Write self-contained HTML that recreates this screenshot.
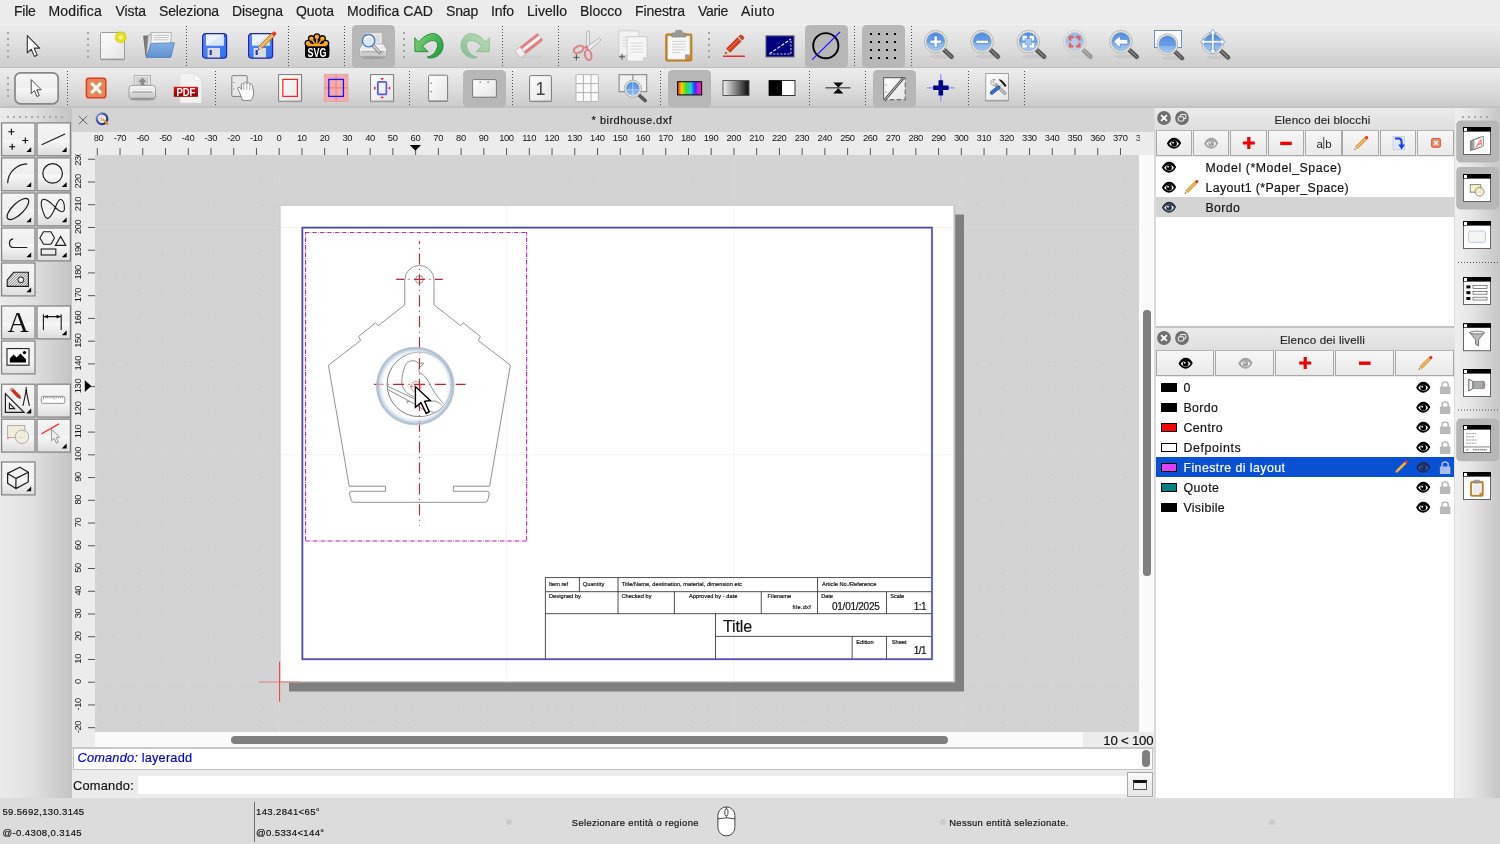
<!DOCTYPE html>
<html lang="it"><head><meta charset="utf-8"><title>LibreCAD - birdhouse.dxf</title>
<style>
html,body{margin:0;padding:0;}
body{width:1500px;height:844px;overflow:hidden;position:relative;background:#dcdcdc;font-family:"Liberation Sans", sans-serif;}
.a{position:absolute;}
.t{position:absolute;white-space:pre;line-height:1;font-family:"Liberation Sans", sans-serif;-webkit-text-stroke:0.18px;}
svg{position:absolute;left:0;top:0;overflow:visible;will-change:transform;}
#tx{position:absolute;left:0;top:0;width:1500px;height:844px;will-change:transform;}

.btn{position:absolute;box-sizing:border-box;border:1px solid #8e8e8e;background:linear-gradient(#f6f6f6,#e2e2e2);}
.tb{position:absolute;box-sizing:border-box;border:1px solid #8f8f8f;background:linear-gradient(#fbfbfb 0%,#f0f0f0 45%,#e4e4e4 100%);}
.db{position:absolute;box-sizing:border-box;border:1.2px solid #a9a9a9;border-top-color:#b4b4b4;background:linear-gradient(#f7f7f7,#e9e9e9);}
.pr{position:absolute;background:#b9b9b9;border-radius:5px;}

.rl{font-family:"Liberation Sans",sans-serif;font-size:9.4px;letter-spacing:-0.4px;fill:#161616;}
.tbk{font-family:"Liberation Sans",sans-serif;fill:#111;}

</style></head><body>
<div class="a" style="left:0px;top:0px;width:1500px;height:24px;background:#ececec;"></div>
<div class="a" style="left:0px;top:24px;width:1500px;height:44px;background:linear-gradient(#f2f2f2 0%,#ebebeb 4%,#e3e3e3 35%,#cdcdcd 100%);"></div>
<div class="a" style="left:0px;top:67.3px;width:1500px;height:1px;background:#c0c0c0;"></div>
<div class="a" style="left:0px;top:68.3px;width:1500px;height:38.7px;background:linear-gradient(#ededed 0%,#e3e3e3 35%,#cbcbcb 100%);"></div>
<div class="a" style="left:0px;top:106px;width:1500px;height:2px;background:#c2c2c2;"></div>
<div class="a" style="left:0px;top:108px;width:72px;height:690px;background:linear-gradient(90deg,#ebebeb 0%,#e2e2e2 40%,#c3c3c3 100%);"></div>
<div class="a" style="left:72px;top:108px;width:1082px;height:24px;background:#d4d4d4;"></div>
<div class="a" style="left:72px;top:132px;width:1082px;height:23px;background:#ececec;"></div>
<div class="a" style="left:72px;top:155px;width:23px;height:592px;background:#ececec;"></div>
<div class="a" style="left:95px;top:155px;width:1044px;height:577px;background:#d3d3d3;"></div>
<div class="a" style="left:1139px;top:155px;width:15px;height:577px;background:#fafafa;"></div>
<div class="a" style="left:95px;top:732px;width:988px;height:15px;background:#fafafa;"></div>
<div class="a" style="left:1083px;top:732px;width:71px;height:15px;background:#ececec;"></div>
<div class="a" style="left:231px;top:736px;width:717px;height:8px;background:#7f7f7f;border-radius:4px;"></div>
<div class="a" style="left:1143.2px;top:309.5px;width:7.6px;height:266px;background:#7f7f7f;border-radius:3.5px;"></div>
<div class="a" style="left:72px;top:747px;width:1082px;height:51px;background:#ececec;"></div>
<div class="a" style="left:72px;top:747px;width:1082px;height:2px;background:#c8c8c8;"></div>
<div class="a" style="left:73px;top:749px;width:1080px;height:21px;background:#fff;box-sizing:border-box;border:1px solid #c2c2c2;border-top:none;"></div>
<div class="a" style="left:1138px;top:749px;width:14px;height:20px;background:#fafafa;"></div>
<div class="a" style="left:1142px;top:750px;width:8px;height:17px;background:#7f7f7f;border-radius:4px;"></div>
<div class="a" style="left:138px;top:776px;width:989px;height:18px;background:#fff;"></div>
<div class="a" style="left:1127px;top:772px;width:26px;height:25px;box-sizing:border-box;border:1px solid #a8a8a8;background:linear-gradient(#fafafa,#e6e6e6);"></div>
<div class="a" style="left:1133px;top:780px;width:14px;height:9.5px;box-sizing:border-box;border:1px solid #555;border-top:3px solid #111;background:#f4f4f4;"></div>
<div class="a" style="left:1154px;top:108px;width:299px;height:690px;background:#ececec;"></div>
<div class="a" style="left:1154px;top:108px;width:1.5px;height:690px;background:#dadada;"></div>
<div class="a" style="left:1155px;top:108px;width:299.5px;height:23px;background:linear-gradient(#ebebeb,#dedede);"></div>
<div class="a" style="left:1155.6px;top:157px;width:298.9px;height:169px;background:#fff;"></div>
<div class="a" style="left:1155.6px;top:326px;width:298.9px;height:1.5px;background:#c4c4c4;"></div>
<div class="a" style="left:1155.6px;top:197px;width:298.9px;height:20px;background:#d4d4d4;"></div>
<div class="a" style="left:1155px;top:328px;width:299.5px;height:22px;background:linear-gradient(#ebebeb,#dedede);"></div>
<div class="a" style="left:1155.6px;top:377px;width:298.9px;height:421px;background:#fff;"></div>
<div class="a" style="left:1155.6px;top:457px;width:298.9px;height:20px;background:#0a50d2;"></div>
<div class="db" style="left:1155.6px;top:130px;width:36.5px;height:25.6px;"></div>
<div class="db" style="left:1192.9px;top:130px;width:36.5px;height:25.6px;"></div>
<div class="db" style="left:1230.3px;top:130px;width:36.5px;height:25.6px;"></div>
<div class="db" style="left:1267.6px;top:130px;width:36.5px;height:25.6px;"></div>
<div class="db" style="left:1305.0px;top:130px;width:36.5px;height:25.6px;"></div>
<div class="db" style="left:1342.3px;top:130px;width:36.5px;height:25.6px;"></div>
<div class="db" style="left:1379.7px;top:130px;width:36.5px;height:25.6px;"></div>
<div class="db" style="left:1417.0px;top:130px;width:36.5px;height:25.6px;"></div>
<div class="db" style="left:1155.6px;top:350px;width:58.9px;height:25.7px;"></div>
<div class="db" style="left:1215.4px;top:350px;width:58.9px;height:25.7px;"></div>
<div class="db" style="left:1275.1px;top:350px;width:58.9px;height:25.7px;"></div>
<div class="db" style="left:1334.9px;top:350px;width:58.9px;height:25.7px;"></div>
<div class="db" style="left:1394.7px;top:350px;width:58.9px;height:25.7px;"></div>
<div class="a" style="left:1161px;top:383px;width:16px;height:8.8px;box-sizing:border-box;border:1px solid #000;background:#000;"></div>
<div class="a" style="left:1161px;top:403px;width:16px;height:8.8px;box-sizing:border-box;border:1px solid #000;background:#000;"></div>
<div class="a" style="left:1161px;top:423px;width:16px;height:8.8px;box-sizing:border-box;border:1px solid #000;background:#f00;"></div>
<div class="a" style="left:1161px;top:443px;width:16px;height:8.8px;box-sizing:border-box;border:1px solid #000;background:#fff;"></div>
<div class="a" style="left:1161px;top:463px;width:16px;height:8.8px;box-sizing:border-box;border:1px solid #000;background:#e040fb;"></div>
<div class="a" style="left:1161px;top:483px;width:16px;height:8.8px;box-sizing:border-box;border:1px solid #000;background:#008080;"></div>
<div class="a" style="left:1161px;top:503px;width:16px;height:8.8px;box-sizing:border-box;border:1px solid #000;background:#000;"></div>
<div class="a" style="left:1454.5px;top:108px;width:45.5px;height:690px;background:linear-gradient(90deg,#efefef 0%,#e6e6e6 35%,#c6c6c6 100%);"></div>
<div class="a" style="left:0px;top:798px;width:1500px;height:46px;background:#dcdcdc;"></div>
<div class="a" style="left:253.5px;top:802px;width:1px;height:40px;background:#6e6e6e;"></div>
<div class="a" style="left:506px;top:819px;width:6px;height:6px;background:#cbcbcb;border-radius:3px;"></div>
<div class="a" style="left:940px;top:819px;width:6px;height:6px;background:#cbcbcb;border-radius:3px;"></div>
<div class="a" style="left:1269px;top:819px;width:6px;height:6px;background:#cbcbcb;border-radius:3px;"></div>
<svg width="1500" height="844" viewBox="0 0 1500 844"><defs><clipPath id="cH"><rect x="94.2" y="132" width="1045.5" height="23"/></clipPath><clipPath id="cV"><rect x="72" y="154.2" width="23" height="581"/></clipPath><clipPath id="cD"><rect x="95" y="155" width="1044" height="577"/></clipPath><radialGradient id="glow" cx="0.5" cy="0.5" r="0.5"><stop offset="0.78" stop-color="#ffffff" stop-opacity="0"/><stop offset="0.86" stop-color="#dfe7ef" stop-opacity="0.6"/><stop offset="0.92" stop-color="#b9c9d9" stop-opacity="0.82"/><stop offset="0.955" stop-color="#9fb3c8" stop-opacity="0.88"/><stop offset="0.985" stop-color="#b4c4d4" stop-opacity="0.8"/><stop offset="1" stop-color="#d0dae4" stop-opacity="0.45"/></radialGradient></defs><g clip-path="url(#cH)"><rect x="96.80" y="148" width="1" height="7" fill="#555"/><text class="rl" x="97.10" y="140.7" text-anchor="middle">-80</text><rect x="119.54" y="148" width="1" height="7" fill="#555"/><text class="rl" x="119.84" y="140.7" text-anchor="middle">-70</text><rect x="142.28" y="148" width="1" height="7" fill="#555"/><text class="rl" x="142.58" y="140.7" text-anchor="middle">-60</text><rect x="165.01" y="148" width="1" height="7" fill="#555"/><text class="rl" x="165.31" y="140.7" text-anchor="middle">-50</text><rect x="187.75" y="148" width="1" height="7" fill="#555"/><text class="rl" x="188.05" y="140.7" text-anchor="middle">-40</text><rect x="210.49" y="148" width="1" height="7" fill="#555"/><text class="rl" x="210.79" y="140.7" text-anchor="middle">-30</text><rect x="233.23" y="148" width="1" height="7" fill="#555"/><text class="rl" x="233.53" y="140.7" text-anchor="middle">-20</text><rect x="255.96" y="148" width="1" height="7" fill="#555"/><text class="rl" x="256.26" y="140.7" text-anchor="middle">-10</text><rect x="278.70" y="148" width="1" height="7" fill="#555"/><text class="rl" x="279.00" y="140.7" text-anchor="middle">0</text><rect x="301.44" y="148" width="1" height="7" fill="#555"/><text class="rl" x="301.74" y="140.7" text-anchor="middle">10</text><rect x="324.17" y="148" width="1" height="7" fill="#555"/><text class="rl" x="324.47" y="140.7" text-anchor="middle">20</text><rect x="346.91" y="148" width="1" height="7" fill="#555"/><text class="rl" x="347.21" y="140.7" text-anchor="middle">30</text><rect x="369.65" y="148" width="1" height="7" fill="#555"/><text class="rl" x="369.95" y="140.7" text-anchor="middle">40</text><rect x="392.38" y="148" width="1" height="7" fill="#555"/><text class="rl" x="392.69" y="140.7" text-anchor="middle">50</text><rect x="415.12" y="148" width="1" height="7" fill="#555"/><text class="rl" x="415.42" y="140.7" text-anchor="middle">60</text><rect x="437.86" y="148" width="1" height="7" fill="#555"/><text class="rl" x="438.16" y="140.7" text-anchor="middle">70</text><rect x="460.60" y="148" width="1" height="7" fill="#555"/><text class="rl" x="460.90" y="140.7" text-anchor="middle">80</text><rect x="483.33" y="148" width="1" height="7" fill="#555"/><text class="rl" x="483.63" y="140.7" text-anchor="middle">90</text><rect x="506.07" y="148" width="1" height="7" fill="#555"/><text class="rl" x="506.37" y="140.7" text-anchor="middle">100</text><rect x="528.81" y="148" width="1" height="7" fill="#555"/><text class="rl" x="529.11" y="140.7" text-anchor="middle">110</text><rect x="551.54" y="148" width="1" height="7" fill="#555"/><text class="rl" x="551.84" y="140.7" text-anchor="middle">120</text><rect x="574.28" y="148" width="1" height="7" fill="#555"/><text class="rl" x="574.58" y="140.7" text-anchor="middle">130</text><rect x="597.02" y="148" width="1" height="7" fill="#555"/><text class="rl" x="597.32" y="140.7" text-anchor="middle">140</text><rect x="619.75" y="148" width="1" height="7" fill="#555"/><text class="rl" x="620.05" y="140.7" text-anchor="middle">150</text><rect x="642.49" y="148" width="1" height="7" fill="#555"/><text class="rl" x="642.79" y="140.7" text-anchor="middle">160</text><rect x="665.23" y="148" width="1" height="7" fill="#555"/><text class="rl" x="665.53" y="140.7" text-anchor="middle">170</text><rect x="687.97" y="148" width="1" height="7" fill="#555"/><text class="rl" x="688.27" y="140.7" text-anchor="middle">180</text><rect x="710.70" y="148" width="1" height="7" fill="#555"/><text class="rl" x="711.00" y="140.7" text-anchor="middle">190</text><rect x="733.44" y="148" width="1" height="7" fill="#555"/><text class="rl" x="733.74" y="140.7" text-anchor="middle">200</text><rect x="756.18" y="148" width="1" height="7" fill="#555"/><text class="rl" x="756.48" y="140.7" text-anchor="middle">210</text><rect x="778.91" y="148" width="1" height="7" fill="#555"/><text class="rl" x="779.21" y="140.7" text-anchor="middle">220</text><rect x="801.65" y="148" width="1" height="7" fill="#555"/><text class="rl" x="801.95" y="140.7" text-anchor="middle">230</text><rect x="824.39" y="148" width="1" height="7" fill="#555"/><text class="rl" x="824.69" y="140.7" text-anchor="middle">240</text><rect x="847.12" y="148" width="1" height="7" fill="#555"/><text class="rl" x="847.42" y="140.7" text-anchor="middle">250</text><rect x="869.86" y="148" width="1" height="7" fill="#555"/><text class="rl" x="870.16" y="140.7" text-anchor="middle">260</text><rect x="892.60" y="148" width="1" height="7" fill="#555"/><text class="rl" x="892.90" y="140.7" text-anchor="middle">270</text><rect x="915.34" y="148" width="1" height="7" fill="#555"/><text class="rl" x="915.64" y="140.7" text-anchor="middle">280</text><rect x="938.07" y="148" width="1" height="7" fill="#555"/><text class="rl" x="938.37" y="140.7" text-anchor="middle">290</text><rect x="960.81" y="148" width="1" height="7" fill="#555"/><text class="rl" x="961.11" y="140.7" text-anchor="middle">300</text><rect x="983.55" y="148" width="1" height="7" fill="#555"/><text class="rl" x="983.85" y="140.7" text-anchor="middle">310</text><rect x="1006.28" y="148" width="1" height="7" fill="#555"/><text class="rl" x="1006.58" y="140.7" text-anchor="middle">320</text><rect x="1029.02" y="148" width="1" height="7" fill="#555"/><text class="rl" x="1029.32" y="140.7" text-anchor="middle">330</text><rect x="1051.76" y="148" width="1" height="7" fill="#555"/><text class="rl" x="1052.06" y="140.7" text-anchor="middle">340</text><rect x="1074.49" y="148" width="1" height="7" fill="#555"/><text class="rl" x="1074.79" y="140.7" text-anchor="middle">350</text><rect x="1097.23" y="148" width="1" height="7" fill="#555"/><text class="rl" x="1097.53" y="140.7" text-anchor="middle">360</text><rect x="1119.97" y="148" width="1" height="7" fill="#555"/><text class="rl" x="1120.27" y="140.7" text-anchor="middle">370</text><rect x="1142.71" y="148" width="1" height="7" fill="#555"/><text class="rl" x="1143.01" y="140.7" text-anchor="middle">380</text><rect x="1165.44" y="148" width="1" height="7" fill="#555"/><text class="rl" x="1165.74" y="140.7" text-anchor="middle">390</text></g><g clip-path="url(#cV)"><rect x="88" y="727.17" width="7" height="1" fill="#555"/><text class="rl" transform="translate(81.4,727.07) rotate(-90)" text-anchor="middle">-20</text><rect x="88" y="704.44" width="7" height="1" fill="#555"/><text class="rl" transform="translate(81.4,704.34) rotate(-90)" text-anchor="middle">-10</text><rect x="88" y="681.70" width="7" height="1" fill="#555"/><text class="rl" transform="translate(81.4,681.60) rotate(-90)" text-anchor="middle">0</text><rect x="88" y="658.96" width="7" height="1" fill="#555"/><text class="rl" transform="translate(81.4,658.86) rotate(-90)" text-anchor="middle">10</text><rect x="88" y="636.23" width="7" height="1" fill="#555"/><text class="rl" transform="translate(81.4,636.13) rotate(-90)" text-anchor="middle">20</text><rect x="88" y="613.49" width="7" height="1" fill="#555"/><text class="rl" transform="translate(81.4,613.39) rotate(-90)" text-anchor="middle">30</text><rect x="88" y="590.75" width="7" height="1" fill="#555"/><text class="rl" transform="translate(81.4,590.65) rotate(-90)" text-anchor="middle">40</text><rect x="88" y="568.02" width="7" height="1" fill="#555"/><text class="rl" transform="translate(81.4,567.92) rotate(-90)" text-anchor="middle">50</text><rect x="88" y="545.28" width="7" height="1" fill="#555"/><text class="rl" transform="translate(81.4,545.18) rotate(-90)" text-anchor="middle">60</text><rect x="88" y="522.54" width="7" height="1" fill="#555"/><text class="rl" transform="translate(81.4,522.44) rotate(-90)" text-anchor="middle">70</text><rect x="88" y="499.80" width="7" height="1" fill="#555"/><text class="rl" transform="translate(81.4,499.70) rotate(-90)" text-anchor="middle">80</text><rect x="88" y="477.07" width="7" height="1" fill="#555"/><text class="rl" transform="translate(81.4,476.97) rotate(-90)" text-anchor="middle">90</text><rect x="88" y="454.33" width="7" height="1" fill="#555"/><text class="rl" transform="translate(81.4,454.23) rotate(-90)" text-anchor="middle">100</text><rect x="88" y="431.59" width="7" height="1" fill="#555"/><text class="rl" transform="translate(81.4,431.49) rotate(-90)" text-anchor="middle">110</text><rect x="88" y="408.86" width="7" height="1" fill="#555"/><text class="rl" transform="translate(81.4,408.76) rotate(-90)" text-anchor="middle">120</text><rect x="88" y="386.12" width="7" height="1" fill="#555"/><text class="rl" transform="translate(81.4,386.02) rotate(-90)" text-anchor="middle">130</text><rect x="88" y="363.38" width="7" height="1" fill="#555"/><text class="rl" transform="translate(81.4,363.28) rotate(-90)" text-anchor="middle">140</text><rect x="88" y="340.65" width="7" height="1" fill="#555"/><text class="rl" transform="translate(81.4,340.55) rotate(-90)" text-anchor="middle">150</text><rect x="88" y="317.91" width="7" height="1" fill="#555"/><text class="rl" transform="translate(81.4,317.81) rotate(-90)" text-anchor="middle">160</text><rect x="88" y="295.17" width="7" height="1" fill="#555"/><text class="rl" transform="translate(81.4,295.07) rotate(-90)" text-anchor="middle">170</text><rect x="88" y="272.43" width="7" height="1" fill="#555"/><text class="rl" transform="translate(81.4,272.33) rotate(-90)" text-anchor="middle">180</text><rect x="88" y="249.70" width="7" height="1" fill="#555"/><text class="rl" transform="translate(81.4,249.60) rotate(-90)" text-anchor="middle">190</text><rect x="88" y="226.96" width="7" height="1" fill="#555"/><text class="rl" transform="translate(81.4,226.86) rotate(-90)" text-anchor="middle">200</text><rect x="88" y="204.22" width="7" height="1" fill="#555"/><text class="rl" transform="translate(81.4,204.12) rotate(-90)" text-anchor="middle">210</text><rect x="88" y="181.49" width="7" height="1" fill="#555"/><text class="rl" transform="translate(81.4,181.39) rotate(-90)" text-anchor="middle">220</text><rect x="88" y="158.75" width="7" height="1" fill="#555"/><text class="rl" transform="translate(81.4,158.65) rotate(-90)" text-anchor="middle">230</text><rect x="88" y="136.01" width="7" height="1" fill="#555"/><text class="rl" transform="translate(81.4,135.91) rotate(-90)" text-anchor="middle">240</text></g><path d="M409.8 145 L421 145 L415.4 150.8 Z" fill="#000"/><path d="M84.8 380.2 L84.8 392 L91.3 386.1 Z" fill="#000"/><g clip-path="url(#cD)"><path d="M96.7 727.1h1.2v1.2h-1.2zM96.7 704.3h1.2v1.2h-1.2zM96.7 681.6h1.2v1.2h-1.2zM96.7 658.9h1.2v1.2h-1.2zM96.7 636.1h1.2v1.2h-1.2zM96.7 613.4h1.2v1.2h-1.2zM96.7 590.7h1.2v1.2h-1.2zM96.7 567.9h1.2v1.2h-1.2zM96.7 545.2h1.2v1.2h-1.2zM96.7 522.4h1.2v1.2h-1.2zM96.7 499.7h1.2v1.2h-1.2zM96.7 477.0h1.2v1.2h-1.2zM96.7 454.2h1.2v1.2h-1.2zM96.7 431.5h1.2v1.2h-1.2zM96.7 408.8h1.2v1.2h-1.2zM96.7 386.0h1.2v1.2h-1.2zM96.7 363.3h1.2v1.2h-1.2zM96.7 340.5h1.2v1.2h-1.2zM96.7 317.8h1.2v1.2h-1.2zM96.7 295.1h1.2v1.2h-1.2zM96.7 272.3h1.2v1.2h-1.2zM96.7 249.6h1.2v1.2h-1.2zM96.7 226.9h1.2v1.2h-1.2zM96.7 204.1h1.2v1.2h-1.2zM96.7 181.4h1.2v1.2h-1.2zM96.7 158.6h1.2v1.2h-1.2zM119.4 727.1h1.2v1.2h-1.2zM119.4 704.3h1.2v1.2h-1.2zM119.4 681.6h1.2v1.2h-1.2zM119.4 658.9h1.2v1.2h-1.2zM119.4 636.1h1.2v1.2h-1.2zM119.4 613.4h1.2v1.2h-1.2zM119.4 590.7h1.2v1.2h-1.2zM119.4 567.9h1.2v1.2h-1.2zM119.4 545.2h1.2v1.2h-1.2zM119.4 522.4h1.2v1.2h-1.2zM119.4 499.7h1.2v1.2h-1.2zM119.4 477.0h1.2v1.2h-1.2zM119.4 454.2h1.2v1.2h-1.2zM119.4 431.5h1.2v1.2h-1.2zM119.4 408.8h1.2v1.2h-1.2zM119.4 386.0h1.2v1.2h-1.2zM119.4 363.3h1.2v1.2h-1.2zM119.4 340.5h1.2v1.2h-1.2zM119.4 317.8h1.2v1.2h-1.2zM119.4 295.1h1.2v1.2h-1.2zM119.4 272.3h1.2v1.2h-1.2zM119.4 249.6h1.2v1.2h-1.2zM119.4 226.9h1.2v1.2h-1.2zM119.4 204.1h1.2v1.2h-1.2zM119.4 181.4h1.2v1.2h-1.2zM119.4 158.6h1.2v1.2h-1.2zM142.2 727.1h1.2v1.2h-1.2zM142.2 704.3h1.2v1.2h-1.2zM142.2 681.6h1.2v1.2h-1.2zM142.2 658.9h1.2v1.2h-1.2zM142.2 636.1h1.2v1.2h-1.2zM142.2 613.4h1.2v1.2h-1.2zM142.2 590.7h1.2v1.2h-1.2zM142.2 567.9h1.2v1.2h-1.2zM142.2 545.2h1.2v1.2h-1.2zM142.2 522.4h1.2v1.2h-1.2zM142.2 499.7h1.2v1.2h-1.2zM142.2 477.0h1.2v1.2h-1.2zM142.2 454.2h1.2v1.2h-1.2zM142.2 431.5h1.2v1.2h-1.2zM142.2 408.8h1.2v1.2h-1.2zM142.2 386.0h1.2v1.2h-1.2zM142.2 363.3h1.2v1.2h-1.2zM142.2 340.5h1.2v1.2h-1.2zM142.2 317.8h1.2v1.2h-1.2zM142.2 295.1h1.2v1.2h-1.2zM142.2 272.3h1.2v1.2h-1.2zM142.2 249.6h1.2v1.2h-1.2zM142.2 226.9h1.2v1.2h-1.2zM142.2 204.1h1.2v1.2h-1.2zM142.2 181.4h1.2v1.2h-1.2zM142.2 158.6h1.2v1.2h-1.2zM164.9 727.1h1.2v1.2h-1.2zM164.9 704.3h1.2v1.2h-1.2zM164.9 681.6h1.2v1.2h-1.2zM164.9 658.9h1.2v1.2h-1.2zM164.9 636.1h1.2v1.2h-1.2zM164.9 613.4h1.2v1.2h-1.2zM164.9 590.7h1.2v1.2h-1.2zM164.9 567.9h1.2v1.2h-1.2zM164.9 545.2h1.2v1.2h-1.2zM164.9 522.4h1.2v1.2h-1.2zM164.9 499.7h1.2v1.2h-1.2zM164.9 477.0h1.2v1.2h-1.2zM164.9 454.2h1.2v1.2h-1.2zM164.9 431.5h1.2v1.2h-1.2zM164.9 408.8h1.2v1.2h-1.2zM164.9 386.0h1.2v1.2h-1.2zM164.9 363.3h1.2v1.2h-1.2zM164.9 340.5h1.2v1.2h-1.2zM164.9 317.8h1.2v1.2h-1.2zM164.9 295.1h1.2v1.2h-1.2zM164.9 272.3h1.2v1.2h-1.2zM164.9 249.6h1.2v1.2h-1.2zM164.9 226.9h1.2v1.2h-1.2zM164.9 204.1h1.2v1.2h-1.2zM164.9 181.4h1.2v1.2h-1.2zM164.9 158.6h1.2v1.2h-1.2zM187.7 727.1h1.2v1.2h-1.2zM187.7 704.3h1.2v1.2h-1.2zM187.7 681.6h1.2v1.2h-1.2zM187.7 658.9h1.2v1.2h-1.2zM187.7 636.1h1.2v1.2h-1.2zM187.7 613.4h1.2v1.2h-1.2zM187.7 590.7h1.2v1.2h-1.2zM187.7 567.9h1.2v1.2h-1.2zM187.7 545.2h1.2v1.2h-1.2zM187.7 522.4h1.2v1.2h-1.2zM187.7 499.7h1.2v1.2h-1.2zM187.7 477.0h1.2v1.2h-1.2zM187.7 454.2h1.2v1.2h-1.2zM187.7 431.5h1.2v1.2h-1.2zM187.7 408.8h1.2v1.2h-1.2zM187.7 386.0h1.2v1.2h-1.2zM187.7 363.3h1.2v1.2h-1.2zM187.7 340.5h1.2v1.2h-1.2zM187.7 317.8h1.2v1.2h-1.2zM187.7 295.1h1.2v1.2h-1.2zM187.7 272.3h1.2v1.2h-1.2zM187.7 249.6h1.2v1.2h-1.2zM187.7 226.9h1.2v1.2h-1.2zM187.7 204.1h1.2v1.2h-1.2zM187.7 181.4h1.2v1.2h-1.2zM187.7 158.6h1.2v1.2h-1.2zM210.4 727.1h1.2v1.2h-1.2zM210.4 704.3h1.2v1.2h-1.2zM210.4 681.6h1.2v1.2h-1.2zM210.4 658.9h1.2v1.2h-1.2zM210.4 636.1h1.2v1.2h-1.2zM210.4 613.4h1.2v1.2h-1.2zM210.4 590.7h1.2v1.2h-1.2zM210.4 567.9h1.2v1.2h-1.2zM210.4 545.2h1.2v1.2h-1.2zM210.4 522.4h1.2v1.2h-1.2zM210.4 499.7h1.2v1.2h-1.2zM210.4 477.0h1.2v1.2h-1.2zM210.4 454.2h1.2v1.2h-1.2zM210.4 431.5h1.2v1.2h-1.2zM210.4 408.8h1.2v1.2h-1.2zM210.4 386.0h1.2v1.2h-1.2zM210.4 363.3h1.2v1.2h-1.2zM210.4 340.5h1.2v1.2h-1.2zM210.4 317.8h1.2v1.2h-1.2zM210.4 295.1h1.2v1.2h-1.2zM210.4 272.3h1.2v1.2h-1.2zM210.4 249.6h1.2v1.2h-1.2zM210.4 226.9h1.2v1.2h-1.2zM210.4 204.1h1.2v1.2h-1.2zM210.4 181.4h1.2v1.2h-1.2zM210.4 158.6h1.2v1.2h-1.2zM233.1 727.1h1.2v1.2h-1.2zM233.1 704.3h1.2v1.2h-1.2zM233.1 681.6h1.2v1.2h-1.2zM233.1 658.9h1.2v1.2h-1.2zM233.1 636.1h1.2v1.2h-1.2zM233.1 613.4h1.2v1.2h-1.2zM233.1 590.7h1.2v1.2h-1.2zM233.1 567.9h1.2v1.2h-1.2zM233.1 545.2h1.2v1.2h-1.2zM233.1 522.4h1.2v1.2h-1.2zM233.1 499.7h1.2v1.2h-1.2zM233.1 477.0h1.2v1.2h-1.2zM233.1 454.2h1.2v1.2h-1.2zM233.1 431.5h1.2v1.2h-1.2zM233.1 408.8h1.2v1.2h-1.2zM233.1 386.0h1.2v1.2h-1.2zM233.1 363.3h1.2v1.2h-1.2zM233.1 340.5h1.2v1.2h-1.2zM233.1 317.8h1.2v1.2h-1.2zM233.1 295.1h1.2v1.2h-1.2zM233.1 272.3h1.2v1.2h-1.2zM233.1 249.6h1.2v1.2h-1.2zM233.1 226.9h1.2v1.2h-1.2zM233.1 204.1h1.2v1.2h-1.2zM233.1 181.4h1.2v1.2h-1.2zM233.1 158.6h1.2v1.2h-1.2zM255.9 727.1h1.2v1.2h-1.2zM255.9 704.3h1.2v1.2h-1.2zM255.9 681.6h1.2v1.2h-1.2zM255.9 658.9h1.2v1.2h-1.2zM255.9 636.1h1.2v1.2h-1.2zM255.9 613.4h1.2v1.2h-1.2zM255.9 590.7h1.2v1.2h-1.2zM255.9 567.9h1.2v1.2h-1.2zM255.9 545.2h1.2v1.2h-1.2zM255.9 522.4h1.2v1.2h-1.2zM255.9 499.7h1.2v1.2h-1.2zM255.9 477.0h1.2v1.2h-1.2zM255.9 454.2h1.2v1.2h-1.2zM255.9 431.5h1.2v1.2h-1.2zM255.9 408.8h1.2v1.2h-1.2zM255.9 386.0h1.2v1.2h-1.2zM255.9 363.3h1.2v1.2h-1.2zM255.9 340.5h1.2v1.2h-1.2zM255.9 317.8h1.2v1.2h-1.2zM255.9 295.1h1.2v1.2h-1.2zM255.9 272.3h1.2v1.2h-1.2zM255.9 249.6h1.2v1.2h-1.2zM255.9 226.9h1.2v1.2h-1.2zM255.9 204.1h1.2v1.2h-1.2zM255.9 181.4h1.2v1.2h-1.2zM255.9 158.6h1.2v1.2h-1.2zM278.6 727.1h1.2v1.2h-1.2zM278.6 704.3h1.2v1.2h-1.2zM278.6 181.4h1.2v1.2h-1.2zM278.6 158.6h1.2v1.2h-1.2zM301.3 727.1h1.2v1.2h-1.2zM301.3 704.3h1.2v1.2h-1.2zM301.3 181.4h1.2v1.2h-1.2zM301.3 158.6h1.2v1.2h-1.2zM324.1 727.1h1.2v1.2h-1.2zM324.1 704.3h1.2v1.2h-1.2zM324.1 181.4h1.2v1.2h-1.2zM324.1 158.6h1.2v1.2h-1.2zM346.8 727.1h1.2v1.2h-1.2zM346.8 704.3h1.2v1.2h-1.2zM346.8 181.4h1.2v1.2h-1.2zM346.8 158.6h1.2v1.2h-1.2zM369.5 727.1h1.2v1.2h-1.2zM369.5 704.3h1.2v1.2h-1.2zM369.5 181.4h1.2v1.2h-1.2zM369.5 158.6h1.2v1.2h-1.2zM392.3 727.1h1.2v1.2h-1.2zM392.3 704.3h1.2v1.2h-1.2zM392.3 181.4h1.2v1.2h-1.2zM392.3 158.6h1.2v1.2h-1.2zM415.0 727.1h1.2v1.2h-1.2zM415.0 704.3h1.2v1.2h-1.2zM415.0 181.4h1.2v1.2h-1.2zM415.0 158.6h1.2v1.2h-1.2zM437.8 727.1h1.2v1.2h-1.2zM437.8 704.3h1.2v1.2h-1.2zM437.8 181.4h1.2v1.2h-1.2zM437.8 158.6h1.2v1.2h-1.2zM460.5 727.1h1.2v1.2h-1.2zM460.5 704.3h1.2v1.2h-1.2zM460.5 181.4h1.2v1.2h-1.2zM460.5 158.6h1.2v1.2h-1.2zM483.2 727.1h1.2v1.2h-1.2zM483.2 704.3h1.2v1.2h-1.2zM483.2 181.4h1.2v1.2h-1.2zM483.2 158.6h1.2v1.2h-1.2zM506.0 727.1h1.2v1.2h-1.2zM506.0 704.3h1.2v1.2h-1.2zM506.0 181.4h1.2v1.2h-1.2zM506.0 158.6h1.2v1.2h-1.2zM528.7 727.1h1.2v1.2h-1.2zM528.7 704.3h1.2v1.2h-1.2zM528.7 181.4h1.2v1.2h-1.2zM528.7 158.6h1.2v1.2h-1.2zM551.4 727.1h1.2v1.2h-1.2zM551.4 704.3h1.2v1.2h-1.2zM551.4 181.4h1.2v1.2h-1.2zM551.4 158.6h1.2v1.2h-1.2zM574.2 727.1h1.2v1.2h-1.2zM574.2 704.3h1.2v1.2h-1.2zM574.2 181.4h1.2v1.2h-1.2zM574.2 158.6h1.2v1.2h-1.2zM596.9 727.1h1.2v1.2h-1.2zM596.9 704.3h1.2v1.2h-1.2zM596.9 181.4h1.2v1.2h-1.2zM596.9 158.6h1.2v1.2h-1.2zM619.7 727.1h1.2v1.2h-1.2zM619.7 704.3h1.2v1.2h-1.2zM619.7 181.4h1.2v1.2h-1.2zM619.7 158.6h1.2v1.2h-1.2zM642.4 727.1h1.2v1.2h-1.2zM642.4 704.3h1.2v1.2h-1.2zM642.4 181.4h1.2v1.2h-1.2zM642.4 158.6h1.2v1.2h-1.2zM665.1 727.1h1.2v1.2h-1.2zM665.1 704.3h1.2v1.2h-1.2zM665.1 181.4h1.2v1.2h-1.2zM665.1 158.6h1.2v1.2h-1.2zM687.9 727.1h1.2v1.2h-1.2zM687.9 704.3h1.2v1.2h-1.2zM687.9 181.4h1.2v1.2h-1.2zM687.9 158.6h1.2v1.2h-1.2zM710.6 727.1h1.2v1.2h-1.2zM710.6 704.3h1.2v1.2h-1.2zM710.6 181.4h1.2v1.2h-1.2zM710.6 158.6h1.2v1.2h-1.2zM733.3 727.1h1.2v1.2h-1.2zM733.3 704.3h1.2v1.2h-1.2zM733.3 181.4h1.2v1.2h-1.2zM733.3 158.6h1.2v1.2h-1.2zM756.1 727.1h1.2v1.2h-1.2zM756.1 704.3h1.2v1.2h-1.2zM756.1 181.4h1.2v1.2h-1.2zM756.1 158.6h1.2v1.2h-1.2zM778.8 727.1h1.2v1.2h-1.2zM778.8 704.3h1.2v1.2h-1.2zM778.8 181.4h1.2v1.2h-1.2zM778.8 158.6h1.2v1.2h-1.2zM801.6 727.1h1.2v1.2h-1.2zM801.6 704.3h1.2v1.2h-1.2zM801.6 181.4h1.2v1.2h-1.2zM801.6 158.6h1.2v1.2h-1.2zM824.3 727.1h1.2v1.2h-1.2zM824.3 704.3h1.2v1.2h-1.2zM824.3 181.4h1.2v1.2h-1.2zM824.3 158.6h1.2v1.2h-1.2zM847.0 727.1h1.2v1.2h-1.2zM847.0 704.3h1.2v1.2h-1.2zM847.0 181.4h1.2v1.2h-1.2zM847.0 158.6h1.2v1.2h-1.2zM869.8 727.1h1.2v1.2h-1.2zM869.8 704.3h1.2v1.2h-1.2zM869.8 181.4h1.2v1.2h-1.2zM869.8 158.6h1.2v1.2h-1.2zM892.5 727.1h1.2v1.2h-1.2zM892.5 704.3h1.2v1.2h-1.2zM892.5 181.4h1.2v1.2h-1.2zM892.5 158.6h1.2v1.2h-1.2zM915.2 727.1h1.2v1.2h-1.2zM915.2 704.3h1.2v1.2h-1.2zM915.2 181.4h1.2v1.2h-1.2zM915.2 158.6h1.2v1.2h-1.2zM938.0 727.1h1.2v1.2h-1.2zM938.0 704.3h1.2v1.2h-1.2zM938.0 181.4h1.2v1.2h-1.2zM938.0 158.6h1.2v1.2h-1.2zM960.7 727.1h1.2v1.2h-1.2zM960.7 704.3h1.2v1.2h-1.2zM960.7 681.6h1.2v1.2h-1.2zM960.7 658.9h1.2v1.2h-1.2zM960.7 636.1h1.2v1.2h-1.2zM960.7 613.4h1.2v1.2h-1.2zM960.7 590.7h1.2v1.2h-1.2zM960.7 567.9h1.2v1.2h-1.2zM960.7 545.2h1.2v1.2h-1.2zM960.7 522.4h1.2v1.2h-1.2zM960.7 499.7h1.2v1.2h-1.2zM960.7 477.0h1.2v1.2h-1.2zM960.7 454.2h1.2v1.2h-1.2zM960.7 431.5h1.2v1.2h-1.2zM960.7 408.8h1.2v1.2h-1.2zM960.7 386.0h1.2v1.2h-1.2zM960.7 363.3h1.2v1.2h-1.2zM960.7 340.5h1.2v1.2h-1.2zM960.7 317.8h1.2v1.2h-1.2zM960.7 295.1h1.2v1.2h-1.2zM960.7 272.3h1.2v1.2h-1.2zM960.7 249.6h1.2v1.2h-1.2zM960.7 226.9h1.2v1.2h-1.2zM960.7 204.1h1.2v1.2h-1.2zM960.7 181.4h1.2v1.2h-1.2zM960.7 158.6h1.2v1.2h-1.2zM983.4 727.1h1.2v1.2h-1.2zM983.4 704.3h1.2v1.2h-1.2zM983.4 681.6h1.2v1.2h-1.2zM983.4 658.9h1.2v1.2h-1.2zM983.4 636.1h1.2v1.2h-1.2zM983.4 613.4h1.2v1.2h-1.2zM983.4 590.7h1.2v1.2h-1.2zM983.4 567.9h1.2v1.2h-1.2zM983.4 545.2h1.2v1.2h-1.2zM983.4 522.4h1.2v1.2h-1.2zM983.4 499.7h1.2v1.2h-1.2zM983.4 477.0h1.2v1.2h-1.2zM983.4 454.2h1.2v1.2h-1.2zM983.4 431.5h1.2v1.2h-1.2zM983.4 408.8h1.2v1.2h-1.2zM983.4 386.0h1.2v1.2h-1.2zM983.4 363.3h1.2v1.2h-1.2zM983.4 340.5h1.2v1.2h-1.2zM983.4 317.8h1.2v1.2h-1.2zM983.4 295.1h1.2v1.2h-1.2zM983.4 272.3h1.2v1.2h-1.2zM983.4 249.6h1.2v1.2h-1.2zM983.4 226.9h1.2v1.2h-1.2zM983.4 204.1h1.2v1.2h-1.2zM983.4 181.4h1.2v1.2h-1.2zM983.4 158.6h1.2v1.2h-1.2zM1006.2 727.1h1.2v1.2h-1.2zM1006.2 704.3h1.2v1.2h-1.2zM1006.2 681.6h1.2v1.2h-1.2zM1006.2 658.9h1.2v1.2h-1.2zM1006.2 636.1h1.2v1.2h-1.2zM1006.2 613.4h1.2v1.2h-1.2zM1006.2 590.7h1.2v1.2h-1.2zM1006.2 567.9h1.2v1.2h-1.2zM1006.2 545.2h1.2v1.2h-1.2zM1006.2 522.4h1.2v1.2h-1.2zM1006.2 499.7h1.2v1.2h-1.2zM1006.2 477.0h1.2v1.2h-1.2zM1006.2 454.2h1.2v1.2h-1.2zM1006.2 431.5h1.2v1.2h-1.2zM1006.2 408.8h1.2v1.2h-1.2zM1006.2 386.0h1.2v1.2h-1.2zM1006.2 363.3h1.2v1.2h-1.2zM1006.2 340.5h1.2v1.2h-1.2zM1006.2 317.8h1.2v1.2h-1.2zM1006.2 295.1h1.2v1.2h-1.2zM1006.2 272.3h1.2v1.2h-1.2zM1006.2 249.6h1.2v1.2h-1.2zM1006.2 226.9h1.2v1.2h-1.2zM1006.2 204.1h1.2v1.2h-1.2zM1006.2 181.4h1.2v1.2h-1.2zM1006.2 158.6h1.2v1.2h-1.2zM1028.9 727.1h1.2v1.2h-1.2zM1028.9 704.3h1.2v1.2h-1.2zM1028.9 681.6h1.2v1.2h-1.2zM1028.9 658.9h1.2v1.2h-1.2zM1028.9 636.1h1.2v1.2h-1.2zM1028.9 613.4h1.2v1.2h-1.2zM1028.9 590.7h1.2v1.2h-1.2zM1028.9 567.9h1.2v1.2h-1.2zM1028.9 545.2h1.2v1.2h-1.2zM1028.9 522.4h1.2v1.2h-1.2zM1028.9 499.7h1.2v1.2h-1.2zM1028.9 477.0h1.2v1.2h-1.2zM1028.9 454.2h1.2v1.2h-1.2zM1028.9 431.5h1.2v1.2h-1.2zM1028.9 408.8h1.2v1.2h-1.2zM1028.9 386.0h1.2v1.2h-1.2zM1028.9 363.3h1.2v1.2h-1.2zM1028.9 340.5h1.2v1.2h-1.2zM1028.9 317.8h1.2v1.2h-1.2zM1028.9 295.1h1.2v1.2h-1.2zM1028.9 272.3h1.2v1.2h-1.2zM1028.9 249.6h1.2v1.2h-1.2zM1028.9 226.9h1.2v1.2h-1.2zM1028.9 204.1h1.2v1.2h-1.2zM1028.9 181.4h1.2v1.2h-1.2zM1028.9 158.6h1.2v1.2h-1.2zM1051.7 727.1h1.2v1.2h-1.2zM1051.7 704.3h1.2v1.2h-1.2zM1051.7 681.6h1.2v1.2h-1.2zM1051.7 658.9h1.2v1.2h-1.2zM1051.7 636.1h1.2v1.2h-1.2zM1051.7 613.4h1.2v1.2h-1.2zM1051.7 590.7h1.2v1.2h-1.2zM1051.7 567.9h1.2v1.2h-1.2zM1051.7 545.2h1.2v1.2h-1.2zM1051.7 522.4h1.2v1.2h-1.2zM1051.7 499.7h1.2v1.2h-1.2zM1051.7 477.0h1.2v1.2h-1.2zM1051.7 454.2h1.2v1.2h-1.2zM1051.7 431.5h1.2v1.2h-1.2zM1051.7 408.8h1.2v1.2h-1.2zM1051.7 386.0h1.2v1.2h-1.2zM1051.7 363.3h1.2v1.2h-1.2zM1051.7 340.5h1.2v1.2h-1.2zM1051.7 317.8h1.2v1.2h-1.2zM1051.7 295.1h1.2v1.2h-1.2zM1051.7 272.3h1.2v1.2h-1.2zM1051.7 249.6h1.2v1.2h-1.2zM1051.7 226.9h1.2v1.2h-1.2zM1051.7 204.1h1.2v1.2h-1.2zM1051.7 181.4h1.2v1.2h-1.2zM1051.7 158.6h1.2v1.2h-1.2zM1074.4 727.1h1.2v1.2h-1.2zM1074.4 704.3h1.2v1.2h-1.2zM1074.4 681.6h1.2v1.2h-1.2zM1074.4 658.9h1.2v1.2h-1.2zM1074.4 636.1h1.2v1.2h-1.2zM1074.4 613.4h1.2v1.2h-1.2zM1074.4 590.7h1.2v1.2h-1.2zM1074.4 567.9h1.2v1.2h-1.2zM1074.4 545.2h1.2v1.2h-1.2zM1074.4 522.4h1.2v1.2h-1.2zM1074.4 499.7h1.2v1.2h-1.2zM1074.4 477.0h1.2v1.2h-1.2zM1074.4 454.2h1.2v1.2h-1.2zM1074.4 431.5h1.2v1.2h-1.2zM1074.4 408.8h1.2v1.2h-1.2zM1074.4 386.0h1.2v1.2h-1.2zM1074.4 363.3h1.2v1.2h-1.2zM1074.4 340.5h1.2v1.2h-1.2zM1074.4 317.8h1.2v1.2h-1.2zM1074.4 295.1h1.2v1.2h-1.2zM1074.4 272.3h1.2v1.2h-1.2zM1074.4 249.6h1.2v1.2h-1.2zM1074.4 226.9h1.2v1.2h-1.2zM1074.4 204.1h1.2v1.2h-1.2zM1074.4 181.4h1.2v1.2h-1.2zM1074.4 158.6h1.2v1.2h-1.2zM1097.1 727.1h1.2v1.2h-1.2zM1097.1 704.3h1.2v1.2h-1.2zM1097.1 681.6h1.2v1.2h-1.2zM1097.1 658.9h1.2v1.2h-1.2zM1097.1 636.1h1.2v1.2h-1.2zM1097.1 613.4h1.2v1.2h-1.2zM1097.1 590.7h1.2v1.2h-1.2zM1097.1 567.9h1.2v1.2h-1.2zM1097.1 545.2h1.2v1.2h-1.2zM1097.1 522.4h1.2v1.2h-1.2zM1097.1 499.7h1.2v1.2h-1.2zM1097.1 477.0h1.2v1.2h-1.2zM1097.1 454.2h1.2v1.2h-1.2zM1097.1 431.5h1.2v1.2h-1.2zM1097.1 408.8h1.2v1.2h-1.2zM1097.1 386.0h1.2v1.2h-1.2zM1097.1 363.3h1.2v1.2h-1.2zM1097.1 340.5h1.2v1.2h-1.2zM1097.1 317.8h1.2v1.2h-1.2zM1097.1 295.1h1.2v1.2h-1.2zM1097.1 272.3h1.2v1.2h-1.2zM1097.1 249.6h1.2v1.2h-1.2zM1097.1 226.9h1.2v1.2h-1.2zM1097.1 204.1h1.2v1.2h-1.2zM1097.1 181.4h1.2v1.2h-1.2zM1097.1 158.6h1.2v1.2h-1.2zM1119.9 727.1h1.2v1.2h-1.2zM1119.9 704.3h1.2v1.2h-1.2zM1119.9 681.6h1.2v1.2h-1.2zM1119.9 658.9h1.2v1.2h-1.2zM1119.9 636.1h1.2v1.2h-1.2zM1119.9 613.4h1.2v1.2h-1.2zM1119.9 590.7h1.2v1.2h-1.2zM1119.9 567.9h1.2v1.2h-1.2zM1119.9 545.2h1.2v1.2h-1.2zM1119.9 522.4h1.2v1.2h-1.2zM1119.9 499.7h1.2v1.2h-1.2zM1119.9 477.0h1.2v1.2h-1.2zM1119.9 454.2h1.2v1.2h-1.2zM1119.9 431.5h1.2v1.2h-1.2zM1119.9 408.8h1.2v1.2h-1.2zM1119.9 386.0h1.2v1.2h-1.2zM1119.9 363.3h1.2v1.2h-1.2zM1119.9 340.5h1.2v1.2h-1.2zM1119.9 317.8h1.2v1.2h-1.2zM1119.9 295.1h1.2v1.2h-1.2zM1119.9 272.3h1.2v1.2h-1.2zM1119.9 249.6h1.2v1.2h-1.2zM1119.9 226.9h1.2v1.2h-1.2zM1119.9 204.1h1.2v1.2h-1.2zM1119.9 181.4h1.2v1.2h-1.2zM1119.9 158.6h1.2v1.2h-1.2z" fill="#e0e0e0"/><rect x="278.7" y="155" width="1" height="577" fill="#d6d6d6"/><rect x="506.1" y="155" width="1" height="577" fill="#d6d6d6"/><rect x="733.4" y="155" width="1" height="577" fill="#d6d6d6"/><rect x="960.8" y="155" width="1" height="577" fill="#d6d6d6"/><rect x="95" y="681.7" width="1044" height="1" fill="#d6d6d6"/><rect x="95" y="454.3" width="1044" height="1" fill="#d6d6d6"/><rect x="95" y="227.0" width="1044" height="1" fill="#d6d6d6"/><rect x="289" y="214.5" width="675" height="477" fill="#808080"/><rect x="279.6" y="204.8" width="675.6" height="477.6" fill="#c6c6c6"/><rect x="280.6" y="205.8" width="672.8" height="475.4" fill="#fff"/><rect x="506.1" y="206" width="1" height="475" fill="#f3f3f3"/><rect x="733.4" y="206" width="1" height="475" fill="#f3f3f3"/><rect x="281" y="454.3" width="672" height="1" fill="#f3f3f3"/><rect x="281" y="227.0" width="672" height="1" fill="#f3f3f3"/><rect x="259" y="681.4" width="41" height="1.2" fill="#e28a8a"/><rect x="279" y="661.7" width="1.1" height="40" fill="#ea4a4a"/><rect x="302.4" y="227.6" width="629.6" height="431.6" fill="none" stroke="#a4a4f6" stroke-width="2.2"/><rect x="302.4" y="227.6" width="629.6" height="431.6" fill="none" stroke="#46469c" stroke-width="1.25"/><path d="M305.1 232.5 H527" fill="none" stroke="#e6b4e6" stroke-width="1.15" stroke-dasharray="11.4 3.53"/><path d="M305.1 232.5 H527" fill="none" stroke="#b62cb6" stroke-width="1.15" stroke-dasharray="3.9 3.6 3.9 1.53 0.7 1.3"/><path d="M305.55 232 V541" fill="none" stroke="#b62cb6" stroke-width="1.15" stroke-dasharray="4.5 1.1 0.6 1.27" stroke-dashoffset="2"/><path d="M526.6 232 V541.6" fill="none" stroke="#b62cb6" stroke-width="1.15" stroke-dasharray="4.5 1.1 0.6 1.27" stroke-dashoffset="2"/><path d="M305.9 541 H527.2" fill="none" stroke="#f0d2f0" stroke-width="2" stroke-dasharray="11.4 3.53"/><path d="M305.9 541 H527.2" fill="none" stroke="#d88ad8" stroke-width="2" stroke-dasharray="3.9 3.6 3.9 1.53 0.7 1.3"/><path d="M404.79999999999995 304.8 V280 A14.6 14.6 0 0 1 434.0 280 V304.8 L460.6 325.7 L463.2 322.8 L480.3 336.5 L478.2 340.5 L510.4 365.2 L489.6 486.2 H453.4 V491.3 H487.6 Q489.5 491.5 489.2 494 L487.8 500 Q487.4 502.3 485.2 502.3 H353.6 Q351.4 502.3 351 500 L349.6 494 Q349.3 491.5 351.2 491.3 H385.5 V486.2 H349.2 L328.4 365.2 L360.6 340.5 L358.5 336.5 L375.6 322.8 L378.2 325.7 L404.8 304.8 Z" fill="none" stroke="#6f6f6f" stroke-width="0.75"/><circle cx="419.4" cy="279.5" r="3.9" fill="none" stroke="#6f6f6f" stroke-width="0.75"/><circle cx="419.4" cy="384.4" r="32.3" fill="none" stroke="#626262" stroke-width="0.8"/><path d="M404.5 367.6 C404.9 365.6 405.6 364.2 406.5 363.2 C407.8 361.8 409.4 361 411.4 360.9 C413.2 360.8 414.6 360.9 415.8 361.2 C416.9 361.6 417.6 362.3 418.1 363.2 L423.7 363.2 L421.3 366.2 L419.1 367.1 L419.1 372.6 C420.6 373.2 421.9 374 423.2 375 C424.8 376.3 426 377.7 427.2 379.4 C429 382 430.4 385.2 432.1 388.3 C433.8 391.4 435.8 394.4 438 397.2 C439.9 399.6 441.8 401.9 443.9 404" fill="none" stroke="#6a6a6a" stroke-width="0.75"/><path d="M404.5 367.6 C403.6 369.8 403 372 402.6 374.5 C402.1 377 401.8 379 401.8 381.4 C401.8 384 402.4 386.2 403.5 388.3 C404.5 390.2 405.8 391.8 407.5 393.2 C409.4 394.7 411.6 395.8 413.9 396.7" fill="none" stroke="#6a6a6a" stroke-width="0.75"/><path d="M430.1 401.6 C431.8 401.1 433.4 400.9 435 401.1 C437 401.4 438.8 402.6 440.4 404 C441.4 404.8 442.2 405.6 442.9 406.5 C442.2 408 441.2 409.1 440 410 C438.2 411.3 436.2 412.1 434 412.4 C432.4 412.5 430.9 411.6 429.6 410.4" fill="none" stroke="#6a6a6a" stroke-width="0.75"/><path d="M387.8 386.3 L414.4 398.8 M388.3 389.8 L413.9 403.6 L428.6 412.9 M406.2 400.4 L407.6 402 L409.4 401.4 M407.6 402 L407.2 403.4" fill="none" stroke="#6a6a6a" stroke-width="0.75"/><path d="M419.5 241 V525.5" fill="none" stroke="#c1272d" stroke-width="1.15" stroke-dasharray="11.2 4.35 1 4.35" stroke-dashoffset="8.5"/><path d="M396.2 279.4 H442.8" fill="none" stroke="#c1272d" stroke-width="1.15" stroke-dasharray="11.2 4.35 1 4.35" stroke-dashoffset="3.2"/><path d="M373.9 384.4 H465.6" fill="none" stroke="#c1272d" stroke-width="1.15" stroke-dasharray="11.2 4.35 1 4.35" stroke-dashoffset="1.8"/><circle cx="415.3" cy="386" r="39.6" fill="url(#glow)"/><circle cx="415.9" cy="386.5" r="5" fill="none" stroke="#f04a4a" stroke-width="0.9" stroke-dasharray="2.2 0.9"/><path d="M410.4 386.5 H413" stroke="#f04a4a" stroke-width="0.8"/><path d="M415.4 386.6 L415.4 407.2 L420.9 402.6 L426.2 413.4 L429.2 411.6 L424.6 401.2 L430.2 400.4 Z" fill="#fff" stroke="#000" stroke-width="1.4" stroke-linejoin="miter"/><rect x="545.3" y="577.2" width="386.0" height="0.85" fill="#333"/><rect x="545.3" y="591.3000000000001" width="386.0" height="0.85" fill="#333"/><rect x="545.3" y="613.3000000000001" width="386.0" height="0.85" fill="#333"/><rect x="715.4" y="635.9" width="215.89999999999998" height="0.85" fill="#333"/><rect x="544.9" y="577.6" width="0.85" height="80.89999999999998" fill="#333"/><rect x="578.9" y="577.6" width="0.85" height="14.100000000000023" fill="#333"/><rect x="617.6" y="577.6" width="0.85" height="36.10000000000002" fill="#333"/><rect x="817.1" y="577.6" width="0.85" height="36.10000000000002" fill="#333"/><rect x="673.9" y="591.7" width="0.85" height="22.0" fill="#333"/><rect x="760.8000000000001" y="591.7" width="0.85" height="22.0" fill="#333"/><rect x="886.0" y="591.7" width="0.85" height="22.0" fill="#333"/><rect x="715.0" y="613.7" width="0.85" height="44.799999999999955" fill="#333"/><rect x="851.7" y="636.3" width="0.85" height="22.200000000000045" fill="#333"/><rect x="886.0" y="636.3" width="0.85" height="22.200000000000045" fill="#333"/></g></svg><svg width="1500" height="844" viewBox="0 0 1500 844"><defs>
<linearGradient id="gLens" x1="0" y1="0" x2="0" y2="1"><stop offset="0" stop-color="#4f8be0"/><stop offset="0.55" stop-color="#6ba2e8"/><stop offset="1" stop-color="#9cc2f2"/></linearGradient>
<linearGradient id="gPage" x1="0" y1="0" x2="1" y2="1"><stop offset="0" stop-color="#ffffff"/><stop offset="1" stop-color="#e4e4e4"/></linearGradient>
<linearGradient id="gBtn" x1="0" y1="0" x2="0" y2="1"><stop offset="0" stop-color="#f6f6f6"/><stop offset="0.48" stop-color="#efefef"/><stop offset="0.52" stop-color="#f8f8f8"/><stop offset="1" stop-color="#dcdcdc"/></linearGradient>
<linearGradient id="gFloppy" x1="0" y1="0" x2="1" y2="1"><stop offset="0" stop-color="#5a8cf4"/><stop offset="1" stop-color="#2f6ff0"/></linearGradient>
<linearGradient id="gFolder" x1="0" y1="0" x2="0" y2="1"><stop offset="0" stop-color="#86b0e2"/><stop offset="1" stop-color="#5d8fd0"/></linearGradient>
<linearGradient id="gGreen" gradientUnits="userSpaceOnUse" x1="415" y1="36" x2="443" y2="56"><stop offset="0" stop-color="#86d27a"/><stop offset="0.5" stop-color="#4cb658"/><stop offset="1" stop-color="#1d9a3e"/></linearGradient>
<linearGradient id="gRain" x1="0" y1="0" x2="1" y2="0"><stop offset="0" stop-color="#ff2020"/><stop offset="0.17" stop-color="#ffd000"/><stop offset="0.36" stop-color="#30e030"/><stop offset="0.55" stop-color="#20d0e0"/><stop offset="0.72" stop-color="#3030ff"/><stop offset="0.88" stop-color="#e020e0"/><stop offset="1" stop-color="#ff2040"/></linearGradient>
<linearGradient id="gGray" x1="0" y1="0" x2="1" y2="0"><stop offset="0" stop-color="#f4f4f4"/><stop offset="1" stop-color="#0a0a0a"/></linearGradient>
<linearGradient id="gPrn" x1="0" y1="0" x2="0" y2="1"><stop offset="0" stop-color="#fafafa"/><stop offset="1" stop-color="#c4c4c4"/></linearGradient>
<linearGradient id="gPdf" x1="0" y1="0" x2="0" y2="1"><stop offset="0" stop-color="#e01818"/><stop offset="1" stop-color="#8a0000"/></linearGradient>
<linearGradient id="gPencil" x1="0" y1="0" x2="1" y2="1"><stop offset="0" stop-color="#f7c25a"/><stop offset="1" stop-color="#d98a1c"/></linearGradient>
<linearGradient id="gRing" x1="0" y1="0" x2="1" y2="1"><stop offset="0" stop-color="#a6b6dc"/><stop offset="0.4" stop-color="#3c54a0"/><stop offset="1" stop-color="#172a72"/></linearGradient>
<radialGradient id="gYel" cx="0.5" cy="0.5" r="0.5"><stop offset="0" stop-color="#fffff0"/><stop offset="0.25" stop-color="#f6f040"/><stop offset="0.7" stop-color="#dcd418" stop-opacity="0.95"/><stop offset="1" stop-color="#d8d020" stop-opacity="0"/></radialGradient>
<g id="mag">
 <path d="M19.5 19.5 L28 27.5" stroke="#bdbdbd" stroke-width="5.5" stroke-linecap="round" opacity="0.6"/>
 <path d="M20.6 20.4 L27.4 26.6" stroke="#505050" stroke-width="4.4" stroke-linecap="round"/>
 <path d="M20.6 20.0 L27.4 26.6" stroke="#8a8a8a" stroke-width="1.2" stroke-linecap="round"/>
 <ellipse cx="16" cy="26.6" rx="11" ry="2" fill="#888" opacity="0.16"/>
 <circle cx="11.7" cy="11.7" r="11.3" fill="#e9e9e2" stroke="#a2a29a" stroke-width="0.7"/>
 <circle cx="11.7" cy="11.7" r="9.2" fill="url(#gLens)" stroke="#8a9bb4" stroke-width="0.6"/>
 <path d="M2.6 12 A9.1 9.1 0 0 0 20.8 12 Z" fill="#fff" opacity="0.13"/>
</g>
<g id="eye">
 <path d="M0 5.7 C1.9 2 4.5 0 7.2 0 C10 0 12.6 1.8 14.3 5.3 C12.5 9 9.9 10.9 7.1 10.9 C4.2 10.9 1.8 9 0 5.7 Z"/>
 <path d="M2.3 6.1 C3.7 4.1 5.2 3.1 7.1 3.1 C9 3.1 10.7 4.1 12 5.9 C10.7 8 9 9.1 7.1 9.1 C5.2 9.1 3.7 8 2.3 6.1 Z" fill="#fff"/>
 <circle cx="7.15" cy="5.9" r="2.9"/>
 <circle cx="6.2" cy="4.9" r="0.9" fill="#fff"/>
</g>
<g id="eyeS">
 <path d="M0 5.7 C1.9 2 4.5 0 7.2 0 C10 0 12.6 1.8 14.3 5.3 C12.5 9 9.9 10.9 7.1 10.9 C4.2 10.9 1.8 9 0 5.7 Z"/>
 <path d="M2.3 6.1 C3.7 4.1 5.2 3.1 7.1 3.1 C9 3.1 10.7 4.1 12 5.9 C10.7 8 9 9.1 7.1 9.1 C5.2 9.1 3.7 8 2.3 6.1 Z" fill="#3560c4"/>
 <circle cx="7.15" cy="5.9" r="2.9"/>
 <circle cx="6.2" cy="4.9" r="0.9" fill="#3560c4"/>
</g>
<g id="pencil">
 <path d="M0.2 13.8 L1.40 10.48 L3.52 12.60 Z" fill="#ecd0a4"/>
 <path d="M0.2 13.8 L0.75 12.3 L1.7 13.25 Z" fill="#3a3020"/>
 <path d="M1.40 10.48 L10.45 1.43 L12.57 3.55 L3.52 12.60 Z" fill="url(#gPencil)" stroke="#a86c18" stroke-width="0.45"/>
 <path d="M2.5 11.5 L11.5 2.5" stroke="#fbe2a8" stroke-width="0.6"/>
 <path d="M10.45 1.43 L11.8 0.1 C12.1 -0.2 12.7 -0.2 13.0 0.1 L13.9 1.0 C14.2 1.3 14.2 1.9 13.9 2.2 L12.57 3.55 Z" fill="#e8342c"/>
</g>
<g id="lock">
 <path d="M2.4 7 V4.4 C2.4 1.6 8.2 1.6 8.2 4.4 V7" fill="none" stroke-width="1.5"/>
 <rect x="0.3" y="6.6" width="10" height="7.2" rx="0.8" stroke="none"/>
</g>
<g id="arrow">
 <path d="M0 0 L0 15.6 L3.6 12.3 L6.4 18.8 L9.0 17.7 L6.2 11.3 L11.2 11.3 Z" fill="#fff" stroke="#333" stroke-width="1.0" stroke-linejoin="round"/>
</g>
<g id="win28">
 <rect x="0.5" y="0.5" width="27" height="27" fill="#fff" stroke="#666" stroke-width="1"/>
 <rect x="0" y="0" width="28" height="4.6" fill="#000"/>
 <rect x="1" y="1" width="3" height="3" fill="#fff"/>
</g>
</defs>
<rect x="7" y="32" width="2" height="2" fill="#a4a4a4"/><rect x="7" y="38" width="2" height="2" fill="#a4a4a4"/><rect x="7" y="44" width="2" height="2" fill="#a4a4a4"/><rect x="7" y="50" width="2" height="2" fill="#a4a4a4"/><rect x="7" y="56" width="2" height="2" fill="#a4a4a4"/>
<rect x="87" y="32" width="2" height="2" fill="#a4a4a4"/><rect x="87" y="38" width="2" height="2" fill="#a4a4a4"/><rect x="87" y="44" width="2" height="2" fill="#a4a4a4"/><rect x="87" y="50" width="2" height="2" fill="#a4a4a4"/><rect x="87" y="56" width="2" height="2" fill="#a4a4a4"/>
<rect x="403" y="32" width="2" height="2" fill="#a4a4a4"/><rect x="403" y="38" width="2" height="2" fill="#a4a4a4"/><rect x="403" y="44" width="2" height="2" fill="#a4a4a4"/><rect x="403" y="50" width="2" height="2" fill="#a4a4a4"/><rect x="403" y="56" width="2" height="2" fill="#a4a4a4"/>
<rect x="708" y="32" width="2" height="2" fill="#a4a4a4"/><rect x="708" y="38" width="2" height="2" fill="#a4a4a4"/><rect x="708" y="44" width="2" height="2" fill="#a4a4a4"/><rect x="708" y="50" width="2" height="2" fill="#a4a4a4"/><rect x="708" y="56" width="2" height="2" fill="#a4a4a4"/>
<path d="M186.5 26V66" stroke="#4e4e4e" stroke-width="1" stroke-dasharray="1 2" fill="none"/>
<path d="M288.5 26V66" stroke="#4e4e4e" stroke-width="1" stroke-dasharray="1 2" fill="none"/>
<path d="M344.5 26V66" stroke="#4e4e4e" stroke-width="1" stroke-dasharray="1 2" fill="none"/>
<path d="M502.5 26V66" stroke="#4e4e4e" stroke-width="1" stroke-dasharray="1 2" fill="none"/>
<path d="M558.5 26V66" stroke="#4e4e4e" stroke-width="1" stroke-dasharray="1 2" fill="none"/>
<path d="M854.5 26V66" stroke="#4e4e4e" stroke-width="1" stroke-dasharray="1 2" fill="none"/>
<path d="M911.5 26V66" stroke="#4e4e4e" stroke-width="1" stroke-dasharray="1 2" fill="none"/>
<rect x="352" y="25" width="43" height="43" rx="4.5" fill="#b7b7b7"/>
<rect x="805" y="25" width="43" height="43" rx="4.5" fill="#b7b7b7"/>
<rect x="862" y="25" width="43" height="43" rx="4.5" fill="#b7b7b7"/>
<g transform="translate(27.3,35.7)" ><g transform="scale(1.1)"><use href="#arrow"/></g></g>
<g transform="translate(100,32)" ><rect x="0.4" y="27" width="24.6" height="1.2" rx="0.6" fill="#9a9a9a"/><rect x="0.5" y="0.5" width="24" height="26.6" rx="1" fill="url(#gPage)" stroke="#9c9c9c" stroke-width="1"/><rect x="2.2" y="9.6" width="0.9" height="0.9" fill="#bbb"/><rect x="2.2" y="17" width="0.9" height="0.9" fill="#bbb"/><circle cx="20.7" cy="5.3" r="6.8" fill="url(#gYel)"/></g>
<g transform="translate(143,32)" ><path d="M0.6 4 H9 L10 6 H27 V24.5 H3 Z" fill="#7c7c7c" stroke="#5e5e5e" stroke-width="0.7"/><path d="M7.6 0.6 L28.4 0.6 L26.8 20 L5.6 20 Z" fill="#f7f7f7" stroke="#8a8a8a" stroke-width="0.6"/><path d="M11 3.4 H26 M10.8 5.6 H25.8 M10.6 7.8 H25.6" stroke="#c2c2c2" stroke-width="1"/><path d="M5.2 3 L9 2.4 L6.2 23 L3.4 23 Z" fill="#d8d8d8" stroke="#909090" stroke-width="0.5"/><path d="M8.4 11.4 L31.4 10.8 L27.8 25.4 L3 25.6 Z" fill="url(#gFolder)" stroke="#4f7fbf" stroke-width="0.8"/></g>
<g transform="translate(202,33)" ><rect x="0.6" y="0.6" width="24" height="24.6" rx="3" fill="url(#gFloppy)" stroke="#2424a8" stroke-width="1.2"/><rect x="4" y="1.4" width="17.6" height="11" fill="#eef3fd"/><path d="M4 12.4 L21.6 1.4 V12.4 Z" fill="#dbe6fa"/><rect x="5.6" y="15" width="12.4" height="9.4" fill="#dcdcdc"/><rect x="7.6" y="17" width="2.2" height="5" fill="#1c3cc8"/><rect x="22" y="2.4" width="1.2" height="1.6" fill="#1c3cc8"/></g>
<g transform="translate(248,33)" ><rect x="0.6" y="0.6" width="24" height="24.6" rx="3" fill="url(#gFloppy)" stroke="#2424a8" stroke-width="1.2"/><rect x="4" y="1.4" width="17.6" height="11" fill="#eef3fd"/><path d="M4 12.4 L21.6 1.4 V12.4 Z" fill="#dbe6fa"/><rect x="5.6" y="15" width="12.4" height="9.4" fill="#dcdcdc"/><rect x="7.6" y="17" width="2.2" height="5" fill="#1c3cc8"/><rect x="22" y="2.4" width="1.2" height="1.6" fill="#1c3cc8"/><g transform="translate(9.6,-1.4) scale(1.33)"><use href="#pencil"/></g></g>
<g transform="translate(305,34)" ><path d="M11.9 12.4 L3.0 9.3" stroke="#050505" stroke-width="3.8" stroke-linecap="round"/><circle cx="3.0" cy="9.3" r="3.5" fill="#050505"/><path d="M11.9 12.4 L6.4 4.6" stroke="#050505" stroke-width="3.8" stroke-linecap="round"/><circle cx="6.4" cy="4.6" r="3.5" fill="#050505"/><path d="M11.9 12.4 L11.9 2.8" stroke="#050505" stroke-width="3.8" stroke-linecap="round"/><circle cx="11.9" cy="2.8" r="3.5" fill="#050505"/><path d="M11.9 12.4 L17.4 4.6" stroke="#050505" stroke-width="3.8" stroke-linecap="round"/><circle cx="17.4" cy="4.6" r="3.5" fill="#050505"/><path d="M11.9 12.4 L20.8 9.3" stroke="#050505" stroke-width="3.8" stroke-linecap="round"/><circle cx="20.8" cy="9.3" r="3.5" fill="#050505"/><rect x="0" y="9" width="24.2" height="15" rx="3.2" fill="#050505"/><path d="M11.9 12.4 L3.0 9.3" stroke="#f9a825" stroke-width="1.5" stroke-linecap="round"/><circle cx="3.0" cy="9.3" r="2.2" fill="#f9a825"/><path d="M11.9 12.4 L6.4 4.6" stroke="#f9a825" stroke-width="1.5" stroke-linecap="round"/><circle cx="6.4" cy="4.6" r="2.2" fill="#f9a825"/><path d="M11.9 12.4 L11.9 2.8" stroke="#f9a825" stroke-width="1.5" stroke-linecap="round"/><circle cx="11.9" cy="2.8" r="2.2" fill="#f9a825"/><path d="M11.9 12.4 L17.4 4.6" stroke="#f9a825" stroke-width="1.5" stroke-linecap="round"/><circle cx="17.4" cy="4.6" r="2.2" fill="#f9a825"/><path d="M11.9 12.4 L20.8 9.3" stroke="#f9a825" stroke-width="1.5" stroke-linecap="round"/><circle cx="20.8" cy="9.3" r="2.2" fill="#f9a825"/><rect x="0" y="12.2" width="24.2" height="11.8" rx="3.2" fill="#050505"/><rect x="0" y="12.2" width="24.2" height="5" fill="#050505"/><path d="M2.2 11.4 Q11.9 8.6 22 11.4 L22 12.2 L2.2 12.2 Z" fill="#f9a825"/><text x="12" y="23" text-anchor="middle" font-family="Liberation Sans, sans-serif" font-weight="bold" font-size="13" textLength="19" lengthAdjust="spacingAndGlyphs" fill="#fff">SVG</text></g>
<g transform="translate(359,32)" ><rect x="7" y="1" width="16" height="13" fill="#ececec" stroke="#b8b8b8" stroke-width="0.6"/><rect x="14" y="3" width="7" height="7" fill="#dcdcdc"/><path d="M3.4 12 H24.4 L27.6 17 V23.4 Q27.6 24.6 26.4 24.6 H1.6 Q0.4 24.6 0.4 23.4 V17 Z" fill="url(#gPrn)" stroke="#9d9d9d" stroke-width="0.7"/><rect x="0.8" y="17" width="26.4" height="1" fill="#fff"/><rect x="2.6" y="19.4" width="22.6" height="1.1" fill="#a8a8a8"/><ellipse cx="14" cy="26" rx="12" ry="1.2" fill="#8c8c8c" opacity="0.55"/><path d="M13.6 13.2 L20.6 20.4" stroke="#8c8c8c" stroke-width="3.4" stroke-linecap="round"/><path d="M13.9 13.3 L20.4 20" stroke="#dcdcdc" stroke-width="1.4" stroke-linecap="round"/><circle cx="9.6" cy="8.7" r="6.2" fill="#dfe9f6" stroke="#4a7ac8" stroke-width="1.4"/><path d="M5.6 7.4 A4.4 4.4 0 0 1 12.6 5.4" fill="none" stroke="#fff" stroke-width="1.6"/></g>
<path d="M414.7 37.7 L418.5 42.2 C421 39 425.4 34.6 431.7 33.5 C437.6 32.8 443.1 38 443.1 45.5 C443.1 52 438 57.6 431 58.1 C429 58.2 427.5 57.7 427 57 C432 56.4 436 52.5 437.4 47 C438.6 42 434.5 39.6 430 41 C427 42 424.5 44.5 422.7 46.3 L428 51.7 L415 51.7 Z" fill="url(#gGreen)" stroke="#17802f" stroke-width="0.8" stroke-linejoin="round"/>
<g transform="translate(904.2,0) scale(-1,1)" opacity="0.42"><path d="M414.7 37.7 L418.5 42.2 C421 39 425.4 34.6 431.7 33.5 C437.6 32.8 443.1 38 443.1 45.5 C443.1 52 438 57.6 431 58.1 C429 58.2 427.5 57.7 427 57 C432 56.4 436 52.5 437.4 47 C438.6 42 434.5 39.6 430 41 C427 42 424.5 44.5 422.7 46.3 L428 51.7 L415 51.7 Z" fill="url(#gGreen)" stroke="#17802f" stroke-width="0.8" stroke-linejoin="round"/></g>
<g transform="translate(518,32)" ><ellipse cx="13" cy="25" rx="12" ry="1.6" fill="#c9c9c9" opacity="0.7"/><g transform="translate(-0.6,0.8) rotate(-38 13 13) scale(0.92)" opacity="0.62"><rect x="-2.4" y="8.2" width="31" height="9.6" rx="0.8" fill="#e04a4a" stroke="#c83c3c" stroke-width="0.5"/><rect x="4.6" y="11.2" width="24" height="3.4" fill="#fff"/><rect x="-2.4" y="8.2" width="6.6" height="9.6" fill="#fff" stroke="#c4c4c4" stroke-width="0.5"/></g></g>
<g transform="translate(572,30)" ><g opacity="0.62"><path d="M14.2 16.6 L14.6 2.6 Q15.2 0.6 17.4 1.2 L17.4 18 Z" fill="#f4f4f4" stroke="#7c7c7c" stroke-width="0.7"/><path d="M13.6 17.4 L27.4 8 Q29 8.6 28.6 10.6 L16.6 21 Z" fill="#f4f4f4" stroke="#7c7c7c" stroke-width="0.7"/><ellipse cx="6.6" cy="19.4" rx="5.2" ry="3.2" transform="rotate(-28 6.6 19.4)" fill="none" stroke="#e24a50" stroke-width="2"/><ellipse cx="16.2" cy="25" rx="3.2" ry="5.2" transform="rotate(-14 16.2 25)" fill="none" stroke="#e24a50" stroke-width="2"/><path d="M11 17.8 L15 17 L16 21" fill="none" stroke="#e24a50" stroke-width="2"/></g><path d="M1.4 27.4 H7.4 M4.4 24.4 V30.4" stroke="#444" stroke-width="0.9"/></g>
<g transform="translate(618.4,30.4)" ><g opacity="0.85"><path d="M0.5 0.5 H20.4 V21 L16.4 25 H0.5 Z" fill="#f6f6f6" stroke="#c2c2c2" stroke-width="0.8"/><path d="M20.4 21 L16.4 25 V21 Z" fill="#cfcfcf"/><path d="M4 7 H17 M4 10 H17 M4 13 H17 M4 16 H17" stroke="#d8d8d8" stroke-width="0.9"/></g></g>
<g transform="translate(626.6,36.2)" ><path d="M0.5 0.5 H20.4 V21 L16.4 25 H0.5 Z" fill="#f6f6f6" stroke="#c2c2c2" stroke-width="0.8"/><path d="M20.4 21 L16.4 25 V21 Z" fill="#cfcfcf"/><path d="M4 7 H17 M4 10 H17 M4 13 H17 M4 16 H17" stroke="#d8d8d8" stroke-width="0.9"/></g>
<path d="M619 56.8 H625 M622 53.8 V59.8" stroke="#444" stroke-width="0.9"/>
<g transform="translate(665,30)" ><rect x="0.8" y="4" width="26" height="27" rx="1.4" fill="#c98a30" stroke="#b0741c" stroke-width="1"/><path d="M2.8 6 H24.8 V24.4 L20 29.2 H2.8 Z" fill="#f8f8f8" stroke="#cfcfcf" stroke-width="0.5"/><path d="M24.8 24.4 L20 29.2 V24.4 Z" fill="#9a9a9a"/><path d="M7 11.4 H20.6 M7 14.2 H20.6 M7 17 H20.6 M7 19.8 H20.6 M7 22.6 H15" stroke="#cdcdcd" stroke-width="0.9"/><path d="M8 3 H10.6 V1.4 Q10.6 0.4 11.6 0.4 H16 Q17 0.4 17 1.4 V3 H19.6 Q20.8 3 20.8 4.2 V7 H6.8 V4.2 Q6.8 3 8 3 Z" fill="#9c9c94" stroke="#77776f" stroke-width="0.6"/></g>
<g transform="translate(723,34)" ><rect x="0" y="21.6" width="22" height="1.2" fill="#f00000"/><path d="M2 20 L3.6 14.6 L7.2 18.2 Z" fill="#e8c9a0"/><path d="M2 20 L2.7 17.8 L4.2 19.3 Z" fill="#222"/><path d="M3.6 14.6 L14.6 3.6 L18.2 7.2 L7.2 18.2 Z" fill="#dc3a1c" stroke="#8c2a10" stroke-width="0.6"/><path d="M5.4 15.8 L15.8 5.4" stroke="#f47a5a" stroke-width="1"/><path d="M14.6 3.6 L15.8 2.4 L19.4 6 L18.2 7.2 Z" fill="#d8d8d8" stroke="#8c8c8c" stroke-width="0.4"/><path d="M15.8 2.4 L16.8 1.4 Q18 0.4 19.2 1.6 L20.4 2.8 Q21.4 4 20.4 5 L19.4 6 Z" fill="#e23a20" stroke="#8c2a10" stroke-width="0.5"/></g>
<g transform="translate(765.5,35.4)" ><rect x="0.5" y="0.5" width="28" height="21" fill="#00007e" stroke="#5a5a6a" stroke-width="1"/><path d="M4 18.4 L25.4 3.6" stroke="#fff" stroke-width="1.1" stroke-dasharray="3.4 1.4"/><path d="M4 18.6 H25.4 V4" fill="none" stroke="#c8c8dc" stroke-width="1.1" stroke-dasharray="2.2 1.4"/></g>
<circle cx="825.8" cy="45.7" r="12.6" fill="none" stroke="#000" stroke-width="1.9"/>
<path d="M812.2 59.6 L840 32" stroke="#1a1aff" stroke-width="1.2"/>
<rect x="870" y="33" width="2" height="2" fill="#000"/><rect x="870" y="41" width="2" height="2" fill="#000"/><rect x="870" y="49" width="2" height="2" fill="#000"/><rect x="870" y="57" width="2" height="2" fill="#000"/><rect x="878" y="33" width="2" height="2" fill="#000"/><rect x="878" y="41" width="2" height="2" fill="#000"/><rect x="878" y="49" width="2" height="2" fill="#000"/><rect x="878" y="57" width="2" height="2" fill="#000"/><rect x="886" y="33" width="2" height="2" fill="#000"/><rect x="886" y="41" width="2" height="2" fill="#000"/><rect x="886" y="49" width="2" height="2" fill="#000"/><rect x="886" y="57" width="2" height="2" fill="#000"/><rect x="894" y="33" width="2" height="2" fill="#000"/><rect x="894" y="41" width="2" height="2" fill="#000"/><rect x="894" y="49" width="2" height="2" fill="#000"/><rect x="894" y="57" width="2" height="2" fill="#000"/>
<g transform="translate(924,30)" ><use href="#mag"/><path d="M6 10.2 H10.2 V6 H13.2 V10.2 H17.4 V13.2 H13.2 V17.4 H10.2 V13.2 H6 Z" fill="#fff" stroke="#3a6ab8" stroke-width="0.5"/></g>
<g transform="translate(970.4,30)" ><use href="#mag"/><rect x="5.6" y="10.2" width="12.2" height="3" fill="#fff" stroke="#3a6ab8" stroke-width="0.5"/></g>
<g transform="translate(1016.6,30)" ><use href="#mag"/><g opacity="1"><rect x="8.9" y="8.9" width="5.6" height="5.6" fill="#a8c8f4"/><path d="M7.00 10.40 V7.00 H10.40M7.00 13.00 V16.40 H10.40M16.40 10.40 V7.00 H13.00M16.40 13.00 V16.40 H13.00" fill="none" stroke="#fff" stroke-width="2.3" stroke-linecap="butt" stroke-linejoin="miter"/></g></g>
<g transform="translate(1063,30)" ><g opacity="0.5"><use href="#mag"/></g><g opacity="0.9"><rect x="8.9" y="8.9" width="5.6" height="5.6" fill="#bccbe6"/><path d="M7.00 10.40 V7.00 H10.40M7.00 13.00 V16.40 H10.40M16.40 10.40 V7.00 H13.00M16.40 13.00 V16.40 H13.00" fill="none" stroke="#f05050" stroke-width="2.3" stroke-linecap="butt" stroke-linejoin="miter"/></g></g>
<g transform="translate(1109.2,30)" ><use href="#mag"/><path d="M4.4 11.7 L11 5.6 V9.4 H18.6 V14 H11 V17.8 Z" fill="#fff" stroke="#3a6ab8" stroke-width="0.5"/></g>
<g transform="translate(1154,30)" ><rect x="0.5" y="0.5" width="27" height="17" fill="#fbfbfb" stroke="#6a8fd0" stroke-width="1"/><g transform="translate(2.6,3.4) scale(0.93)"><use href="#mag"/><path d="M3 12.4 H20.4" stroke="#3d79d0" stroke-width="1" opacity="0.6"/></g></g>
<g transform="translate(1200,30)" ><g transform="translate(1.4,1.6) scale(0.97)"><use href="#mag"/></g><path d="M12.8 -0.6 L16.2 3.6 H14 V10.6 H21 V8.4 L25.2 11.8 L21 15.2 V13 H14 V20 H16.2 L12.8 24.2 L9.4 20 H11.6 V13 H4.6 V15.2 L0.4 11.8 L4.6 8.4 V10.6 H11.6 V3.6 H9.4 Z" fill="#fff" stroke="#4a7cd0" stroke-width="0.6"/></g>
<rect x="7" y="77" width="2" height="2" fill="#a4a4a4"/><rect x="7" y="83" width="2" height="2" fill="#a4a4a4"/><rect x="7" y="89" width="2" height="2" fill="#a4a4a4"/><rect x="7" y="95" width="2" height="2" fill="#a4a4a4"/>
<path d="M67.5 71V105" stroke="#4e4e4e" stroke-width="1" stroke-dasharray="1 2" fill="none"/>
<path d="M215.5 71V105" stroke="#4e4e4e" stroke-width="1" stroke-dasharray="1 2" fill="none"/>
<path d="M409.5 71V105" stroke="#4e4e4e" stroke-width="1" stroke-dasharray="1 2" fill="none"/>
<path d="M512.5 71V105" stroke="#4e4e4e" stroke-width="1" stroke-dasharray="1 2" fill="none"/>
<path d="M660.5 71V105" stroke="#4e4e4e" stroke-width="1" stroke-dasharray="1 2" fill="none"/>
<path d="M809.5 71V105" stroke="#4e4e4e" stroke-width="1" stroke-dasharray="1 2" fill="none"/>
<path d="M865.5 71V105" stroke="#4e4e4e" stroke-width="1" stroke-dasharray="1 2" fill="none"/>
<path d="M968.5 71V105" stroke="#4e4e4e" stroke-width="1" stroke-dasharray="1 2" fill="none"/>
<path d="M1024.5 71V105" stroke="#4e4e4e" stroke-width="1" stroke-dasharray="1 2" fill="none"/>
<rect x="463" y="70" width="43" height="37.5" rx="4.5" fill="#b7b7b7"/>
<rect x="668" y="70" width="43" height="37.5" rx="4.5" fill="#b7b7b7"/>
<rect x="873" y="70" width="43" height="37.5" rx="4.5" fill="#b7b7b7"/>
<rect x="15" y="72.8" width="43.2" height="31" rx="5.5" fill="url(#gBtn)" stroke="#878787" stroke-width="1.7"/>
<g transform="translate(31.2,79.6)" ><g transform="scale(0.9)"><use href="#arrow"/></g></g>
<g transform="translate(85.6,77.4)" ><rect x="0.8" y="0.8" width="19.4" height="19.6" rx="2.6" fill="#e28a5c" stroke="#e23a24" stroke-width="1.5"/><path d="M5.6 5.6 L15.4 15.6 M15.4 5.6 L5.6 15.6" stroke="#fff" stroke-width="3"/></g>
<g transform="translate(128.6,74.8)" ><rect x="5.6" y="0.6" width="16.4" height="12" fill="#e6e6e6" stroke="#a8a8a8" stroke-width="0.8"/><rect x="7.6" y="2.4" width="12.4" height="9" fill="#cfcfcf"/><path d="M13.8 3 L18 7.2 H15.6 V10.6 H12 V7.2 H9.6 Z" fill="#8a8a8a"/><path d="M3.4 10.6 H24 Q26.8 10.6 27 13.4 V22 Q27 23.6 25.4 23.6 H2 Q0.4 23.6 0.4 22 V13.4 Q0.6 10.6 3.4 10.6 Z" fill="url(#gPrn)" stroke="#8e8e8e" stroke-width="0.8"/><rect x="0.9" y="15.6" width="25.6" height="1" fill="#fff"/><rect x="3.4" y="16.6" width="20.6" height="1" rx="0.5" fill="#8c8c8c"/><ellipse cx="13.7" cy="24.6" rx="12.4" ry="1.2" fill="#777" opacity="0.6"/></g>
<g transform="translate(173.6,73)" ><path d="M6.4 0.4 H21 L28 7.4 V30 H6.4 Z" fill="#f2f2f2" stroke="#dadada" stroke-width="0.6"/><path d="M21 0.4 L28 7.4 H21 Z" fill="#fff" stroke="#d0d0d0" stroke-width="0.5"/><rect x="0.2" y="13.8" width="24.2" height="10" fill="url(#gPdf)"/><text x="12.3" y="22.7" text-anchor="middle" font-family="Liberation Sans, sans-serif" font-weight="bold" font-size="10.6" textLength="19" lengthAdjust="spacingAndGlyphs" fill="#fff">PDF</text></g>
<g transform="translate(231,75)" ><rect x="0.8" y="0.6" width="15.4" height="20.8" rx="1" fill="#e9e9e9" stroke="#7f7f7f" stroke-width="1"/><rect x="2.4" y="7" width="1" height="1" fill="#777"/><rect x="2.4" y="13.6" width="1" height="1" fill="#777"/><path d="M8.2 16.6 C6.8 14.4 6.2 13.2 7.2 12.4 C8.2 11.8 9.4 12.8 10.6 14.4 L10.2 9.6 C10.2 8 12.2 7.8 12.6 9.4 L13 8.2 C13.4 6.8 15.4 7 15.6 8.6 L16 8.4 C16.8 7.2 18.6 7.6 18.6 9.2 L19 9.6 C19.8 8.6 21.4 9 21.4 10.6 L22.6 17 C23 20.4 21.6 23.2 19.6 25.4 L11.6 25.4 C10.4 22.8 9.4 19.4 8.2 16.6 Z" fill="#fff" stroke="#777" stroke-width="0.9" stroke-linejoin="round"/><path d="M12.8 9.6 V15 M15.8 8.8 V14.8 M18.8 9.8 V15.2" stroke="#999" stroke-width="0.8"/></g>
<g transform="translate(278,74)" ><rect x="0.6" y="0.6" width="23" height="26.6" fill="url(#gPage)" stroke="#7a7a7a" stroke-width="1"/><rect x="0" y="27.2" width="24.2" height="1" fill="#a0a0a0"/><rect x="4.8" y="5.4" width="14.6" height="17" fill="none" stroke="#ff2222" stroke-width="1.2"/></g>
<g transform="translate(324,74)" ><rect x="0.2" y="0.2" width="23.8" height="27.4" fill="#f5abab"/><path d="M12.1 0.2 V27.6 M0.2 13.9 H24" stroke="#dc8c8c" stroke-width="1.2"/><rect x="0.2" y="0.2" width="23.8" height="27.4" fill="none" stroke="#e09a9a" stroke-width="0.6"/><rect x="4.8" y="5.4" width="14.6" height="17" fill="none" stroke="#1414ff" stroke-width="1.3"/></g>
<g transform="translate(370,74)" ><rect x="0.6" y="0.6" width="23" height="26.6" fill="url(#gPage)" stroke="#7a7a7a" stroke-width="1"/><rect x="0" y="27.2" width="24.2" height="1" fill="#a0a0a0"/><rect x="7.8" y="7.8" width="8.6" height="12.6" rx="1" fill="none" stroke="#5555ff" stroke-width="1.7"/><path d="M10.2 4 H14 L12.1 6.2 Z M10.2 24.2 H14 L12.1 22 Z M4 12.2 V16 L6.2 14.1 Z M20.2 12.2 V16 L18 14.1 Z" fill="#ff1a1a"/></g>
<g transform="translate(428,74.6)" ><rect x="0.6" y="0.6" width="19" height="25.8" rx="1.2" fill="url(#gPage)" stroke="#7a7a7a" stroke-width="1"/><rect x="0.4" y="26.3" width="19.4" height="1" fill="#8a8a8a"/><rect x="2.6" y="8" width="1.2" height="1.2" fill="#555"/><rect x="2.6" y="16.4" width="1.2" height="1.2" fill="#555"/></g>
<g transform="translate(472,79)" ><rect x="0.6" y="0.6" width="23.8" height="17.6" rx="1.2" fill="url(#gPage)" stroke="#7a7a7a" stroke-width="1"/><rect x="0.4" y="18" width="24.2" height="1" fill="#8a8a8a"/><rect x="7.6" y="2.6" width="1.2" height="1.2" fill="#555"/><rect x="15.6" y="2.6" width="1.2" height="1.2" fill="#555"/></g>
<g transform="translate(529,75)" ><rect x="0.6" y="0.6" width="21.8" height="25.6" rx="1.2" fill="url(#gPage)" stroke="#7a7a7a" stroke-width="1"/><rect x="0.4" y="26.1" width="22.2" height="1" fill="#8a8a8a"/><text x="11.4" y="20" text-anchor="middle" font-family="Liberation Sans, sans-serif" font-size="18" fill="#444">1</text></g>
<g transform="translate(575.6,74.2)" ><rect x="0.4" y="0.4" width="22.4" height="27" rx="1" fill="#fafafa" stroke="#aaa" stroke-width="0.8"/><path d="M7.8 0.4 V27.4 M15.4 0.4 V27.4 M0.4 9.4 H22.8 M0.4 18.4 H22.8" stroke="#aaa" stroke-width="0.9"/></g>
<g transform="translate(618.6,74.2)" ><rect x="0.5" y="0.5" width="27.6" height="17" fill="#f0f0f0" stroke="#7d7d7d" stroke-width="1"/><path d="M14.3 0.5 V17.5" stroke="#7d7d7d" stroke-width="1"/><path d="M20.4 21 L26.6 26.4" stroke="#5a5a5a" stroke-width="3.6" stroke-linecap="round"/><circle cx="14.2" cy="14.6" r="8.6" fill="#e4e4dc" stroke="#9a9a92" stroke-width="0.7"/><circle cx="14.2" cy="14.6" r="6.8" fill="url(#gLens)"/><path d="M7.6 15.6 H20.8 M14.2 8 V21" stroke="#dfeaf8" stroke-width="0.8" opacity="0.8"/></g>
<rect x="677.6" y="81.7" width="24" height="13.2" fill="url(#gRain)" stroke="#111" stroke-width="1.1"/>
<rect x="723" y="80.5" width="26" height="15" fill="url(#gGray)" stroke="#555" stroke-width="1"/>
<rect x="769" y="80.5" width="26" height="15" fill="#fff" stroke="#333" stroke-width="1"/><rect x="769" y="80.5" width="13" height="15" fill="#000"/>
<path d="M825.4 87.8 H850.4" stroke="#555" stroke-width="1.4"/><path d="M833.2 82.4 H843.4 L838.3 87.6 Z M833.2 93.6 H843.4 L838.3 88.2 Z" fill="#000"/>
<g transform="translate(883,77)" ><rect x="0.6" y="0.6" width="21.6" height="22" fill="url(#gPage)"/><path d="M0.6 22.6 V0.6 H22.2" fill="none" stroke="#6c6c6c" stroke-width="1.1"/><path d="M22.2 0.6 V22.6 H0.6" fill="none" stroke="#6c6c6c" stroke-width="1.1" stroke-dasharray="4.6 2.4" stroke-dashoffset="2"/><path d="M1.4 23.4 L20.8 0.6" stroke="#4a4a4a" stroke-width="2.6"/><path d="M1.4 23.4 L20.8 0.6" stroke="#dcdcdc" stroke-width="0.9"/><rect x="2.6" y="7.6" width="1" height="1" fill="#666"/><rect x="2.6" y="14.6" width="1" height="1" fill="#666"/></g>
<path d="M927 87.8 H954.6 M940.8 74.2 V101.4" stroke="#8c8cf8" stroke-width="1.2"/><path d="M933.2 87.8 H948.6 M940.8 80.2 V95.6" stroke="#000084" stroke-width="4.6"/>
<rect x="985.2" y="100" width="23.8" height="1.4" fill="#8c8c8c"/><rect x="985.7" y="73.5" width="22.8" height="26.8" fill="url(#gPage)" stroke="#a2a2a2" stroke-width="1"/><path d="M996.4 85.4 L1004.8 93.2" stroke="#8e8e8e" stroke-width="3.4" stroke-linecap="round"/><path d="M996.4 85.4 L1004.8 93.2" stroke="#bcbcbc" stroke-width="2.2" stroke-linecap="round"/><path d="M995.2 79.6 C993.4 78.8 991.2 79.8 990.8 81.8 C990.4 84 992.2 85.8 994.4 85.6 C995.6 85.4 996.6 84.8 997 83.8 L994.6 84 L992.8 82.4 L993.4 80.4 Z" fill="#f4f4f4" stroke="#8e8e8e" stroke-width="0.8" stroke-linejoin="round"/><path d="M998.4 87.4 L1003 83.6" stroke="#d0d0d0" stroke-width="1.8"/><path d="M991.8 92.8 L998.4 87.4" stroke="#1f4f9a" stroke-width="3.8" stroke-linecap="round"/><path d="M991.8 92.8 L998.4 87.4" stroke="#3a72c4" stroke-width="2.4" stroke-linecap="round"/><path d="M998.6 79.2 C1001 79.2 1003 80.8 1004.4 82.8 C1005.4 84.2 1006.5 85 1006.4 86 L1004.8 86.9 C1003.8 85.2 1002.8 83.6 1001.4 82.4 C1000.4 81.4 999.2 80.4 998.6 79.2 Z" fill="#1e1e1e"/>
<rect x="7" y="116" width="2" height="2" fill="#a9a9a9"/><rect x="13" y="116" width="2" height="2" fill="#a9a9a9"/><rect x="19" y="116" width="2" height="2" fill="#a9a9a9"/><rect x="25" y="116" width="2" height="2" fill="#a9a9a9"/><rect x="31" y="116" width="2" height="2" fill="#a9a9a9"/><rect x="37" y="116" width="2" height="2" fill="#a9a9a9"/><rect x="43" y="116" width="2" height="2" fill="#a9a9a9"/><rect x="49" y="116" width="2" height="2" fill="#a9a9a9"/><rect x="55" y="116" width="2" height="2" fill="#a9a9a9"/><rect x="61" y="116" width="2" height="2" fill="#a9a9a9"/>
<rect x="1.6" y="122.89999999999999" width="33.4" height="32.9" fill="url(#gBtn)" stroke="#838383" stroke-width="1.25"/>
<rect x="37.0" y="122.89999999999999" width="33.4" height="32.9" fill="url(#gBtn)" stroke="#838383" stroke-width="1.25"/>
<rect x="1.6" y="157.9" width="33.4" height="32.9" fill="url(#gBtn)" stroke="#838383" stroke-width="1.25"/>
<rect x="37.0" y="157.9" width="33.4" height="32.9" fill="url(#gBtn)" stroke="#838383" stroke-width="1.25"/>
<rect x="1.6" y="193.0" width="33.4" height="32.9" fill="url(#gBtn)" stroke="#838383" stroke-width="1.25"/>
<rect x="37.0" y="193.0" width="33.4" height="32.9" fill="url(#gBtn)" stroke="#838383" stroke-width="1.25"/>
<rect x="1.6" y="228.0" width="33.4" height="32.9" fill="url(#gBtn)" stroke="#838383" stroke-width="1.25"/>
<rect x="37.0" y="228.0" width="33.4" height="32.9" fill="url(#gBtn)" stroke="#838383" stroke-width="1.25"/>
<rect x="1.6" y="263.0" width="33.4" height="32.9" fill="url(#gBtn)" stroke="#838383" stroke-width="1.25"/>
<rect x="1.6" y="306.0" width="33.4" height="32.9" fill="url(#gBtn)" stroke="#838383" stroke-width="1.25"/>
<rect x="37.0" y="306.0" width="33.4" height="32.9" fill="url(#gBtn)" stroke="#838383" stroke-width="1.25"/>
<rect x="1.6" y="341.0" width="33.4" height="32.9" fill="url(#gBtn)" stroke="#838383" stroke-width="1.25"/>
<rect x="1.6" y="384.20000000000005" width="33.4" height="32.9" fill="url(#gBtn)" stroke="#838383" stroke-width="1.25"/>
<rect x="37.0" y="384.20000000000005" width="33.4" height="32.9" fill="url(#gBtn)" stroke="#838383" stroke-width="1.25"/>
<rect x="1.6" y="419.20000000000005" width="33.4" height="32.9" fill="url(#gBtn)" stroke="#838383" stroke-width="1.25"/>
<rect x="37.0" y="419.20000000000005" width="33.4" height="32.9" fill="url(#gBtn)" stroke="#838383" stroke-width="1.25"/>
<rect x="1.6" y="462.0" width="33.4" height="32.9" fill="url(#gBtn)" stroke="#838383" stroke-width="1.25"/>
<path d="M31.2 152.1 h-4.8 l4.8 -4.8 z" fill="#000"/>
<path d="M66.6 152.1 h-4.8 l4.8 -4.8 z" fill="#000"/>
<path d="M31.2 187.10000000000002 h-4.8 l4.8 -4.8 z" fill="#000"/>
<path d="M66.6 187.10000000000002 h-4.8 l4.8 -4.8 z" fill="#000"/>
<path d="M31.2 222.20000000000002 h-4.8 l4.8 -4.8 z" fill="#000"/>
<path d="M66.6 222.20000000000002 h-4.8 l4.8 -4.8 z" fill="#000"/>
<path d="M31.2 257.2 h-4.8 l4.8 -4.8 z" fill="#000"/>
<path d="M66.6 257.2 h-4.8 l4.8 -4.8 z" fill="#000"/>
<path d="M31.2 292.2 h-4.8 l4.8 -4.8 z" fill="#000"/>
<path d="M66.6 335.2 h-4.8 l4.8 -4.8 z" fill="#000"/>
<path d="M31.2 413.40000000000003 h-4.8 l4.8 -4.8 z" fill="#000"/>
<path d="M66.6 448.40000000000003 h-4.8 l4.8 -4.8 z" fill="#000"/>
<path d="M31.2 491.2 h-4.8 l4.8 -4.8 z" fill="#000"/>
<path d="M8.4 131.8h6M11.4 128.8v6" stroke="#000" stroke-width="1.1"/><path d="M22.3 140.5h6M25.3 137.5v6" stroke="#000" stroke-width="1.1"/><path d="M9.2 146.7h6M12.2 143.7v6" stroke="#000" stroke-width="1.1"/><path d="M41.7 144.8 L65 134" stroke="#1c1c1c" stroke-width="1.2"/><path d="M7.6 183.2 A20 20 0 0 1 27.2 163.8" fill="none" stroke="#1c1c1c" stroke-width="1.2"/><circle cx="52.6" cy="173.4" r="9.8" fill="none" stroke="#1c1c1c" stroke-width="1.2"/><ellipse cx="17.9" cy="209" rx="14" ry="5.6" transform="rotate(-44 17.9 209)" fill="none" stroke="#1c1c1c" stroke-width="1.2"/><path d="M41.4 201.6 C42.6 196.6 49 200.4 54.6 206.6 C59.6 212 64 213.6 64.4 209 C64.8 203.6 62.8 198.6 60.2 199.6 C57 200.8 55.4 208.4 52.4 213.6 C49.6 218.6 46.6 220.2 44.6 215.6 C42.8 211.4 40.6 205.2 41.4 201.6 Z" fill="none" stroke="#1c1c1c" stroke-width="1.1"/><path d="M13.2 238.8 A4.4 4.4 0 0 0 13.2 247.5 H27.4" fill="none" stroke="#1c1c1c" stroke-width="1.2"/><polygon points="54.5,238.0 50.9,244.3 43.6,244.3 39.9,238.0 43.5,231.7 50.9,231.7" fill="none" stroke="#1c1c1c" stroke-width="1.1"/><path d="M60.6 236.4 L65.8 245.4 H55.4 Z" fill="none" stroke="#1c1c1c" stroke-width="1.1"/><rect x="41.2" y="249" width="14.6" height="6" fill="none" stroke="#1c1c1c" stroke-width="1.1"/><clipPath id="cHat"><path d="M7.2 286.4 V279.9 L13.7 272.3 H28.4 V286.4 Z"/></clipPath><path d="M7.2 286.4 V279.9 L13.7 272.3 H28.4 V286.4 Z" fill="#f0f0f0"/><path d="M-12.8 286.4 l14.1 -14.1M-10.3 286.4 l14.1 -14.1M-7.8 286.4 l14.1 -14.1M-5.3 286.4 l14.1 -14.1M-2.8 286.4 l14.1 -14.1M-0.3 286.4 l14.1 -14.1M2.2 286.4 l14.1 -14.1M4.7 286.4 l14.1 -14.1M7.2 286.4 l14.1 -14.1M9.7 286.4 l14.1 -14.1M12.2 286.4 l14.1 -14.1M14.7 286.4 l14.1 -14.1M17.2 286.4 l14.1 -14.1M19.7 286.4 l14.1 -14.1M22.2 286.4 l14.1 -14.1M24.7 286.4 l14.1 -14.1M27.2 286.4 l14.1 -14.1M29.7 286.4 l14.1 -14.1M32.2 286.4 l14.1 -14.1M34.7 286.4 l14.1 -14.1" stroke="#2a2a2a" stroke-width="0.55" clip-path="url(#cHat)"/><path d="M7.2 286.4 V279.9 L13.7 272.3 H28.4 V286.4 Z" fill="none" stroke="#1c1c1c" stroke-width="1.1"/><circle cx="20.8" cy="279.8" r="2.9" fill="#f4f4f4" stroke="#1c1c1c" stroke-width="1"/><text x="18.2" y="332" text-anchor="middle" font-family="Liberation Serif, serif" font-size="29.5" fill="#111">A</text><path d="M43.4 314.3 V330 M61.2 314.3 V330 M43.4 316.6 H61.2" fill="none" stroke="#1c1c1c" stroke-width="1.1"/><path d="M43.6 316.6 l4.4 -1.8 v3.6 z M61 316.6 l-4.4 -1.8 v3.6 z" fill="#111"/><rect x="7" y="348.6" width="22" height="16.6" fill="#fff" stroke="#222" stroke-width="1.1"/><path d="M9.8 362.6 V358.4 L13.6 354.6 L16.6 357.6 L20.4 353.6 L26 359.4 V362.6 Z" fill="#000"/><circle cx="24.5" cy="352.6" r="1.7" fill="#000"/><path d="M5.4 393.6 V412.4 H24 Z" fill="none" stroke="#1c1c1c" stroke-width="1.2"/><path d="M9.4 403.4 V408.6 H14.6 Z" fill="none" stroke="#1c1c1c" stroke-width="1.1"/><path d="M10 389.6 L12 387.8 L20 395.4 L20.6 398.4 L17.6 397.6 Z" fill="#dc2a1c" stroke="#8a1a10" stroke-width="0.4"/><path d="M20.6 398.4 L18.6 397.9 L20.1 396.4 Z" fill="#444"/><path d="M10 389.6 L12 387.8 L13.2 388.9 L11.2 390.8 Z" fill="#f0a0a0"/><path d="M26.2 387 V390.4 M26.2 390.4 L23 405.8 M26.2 390.4 L29.4 405.8" fill="none" stroke="#1c1c1c" stroke-width="1.1"/><circle cx="26.2" cy="390.4" r="1" fill="#111"/><rect x="41.4" y="396.4" width="23.4" height="7" rx="1.2" fill="#fdfdfd" stroke="#8a8a8a" stroke-width="0.9"/><path d="M43.6 396.8v2.6M45.7 396.8v1.6M47.8 396.8v1.6M49.9 396.8v1.6M52.0 396.8v1.6M54.1 396.8v2.6M56.2 396.8v1.6M58.3 396.8v1.6M60.4 396.8v1.6M62.5 396.8v1.6" stroke="#666" stroke-width="0.7"/><rect x="7.6" y="425.6" width="17.2" height="12" fill="#f1eedc" stroke="#a4a4a4" stroke-width="0.9"/><circle cx="22" cy="436.8" r="6.7" fill="#f1eedc" fill-opacity="0.85" stroke="#a4a4a4" stroke-width="0.9"/><circle cx="7.9" cy="437.9" r="1.3" fill="#f59a9a"/><path d="M41.5 433.7 L59 423.9" stroke="#ff2a2a" stroke-width="1.3"/><path d="M51.6 429.2 V440.6 L54.3 438.4 L56.4 443.2 L58.4 442.3 L56.4 437.6 L59.6 437.3 Z" fill="#efefef" stroke="#8c8c8c" stroke-width="0.9" stroke-linejoin="round"/><path d="M7.6 473.4 L19.8 467.2 L28.4 472.2 L28.2 482 L15.8 488.6 L7.6 483.2 Z M7.6 473.4 L16 478.4 L28.4 472.2 M16 478.4 L15.8 488.6" fill="none" stroke="#1c1c1c" stroke-width="1.2" stroke-linejoin="round"/>
<path d="M78.8 116 L87.2 124.2 M87.2 116 L78.8 124.2" stroke="#666" stroke-width="1"/>
<g transform="translate(95.6,112.6)" ><circle cx="6.4" cy="6.2" r="5.3" fill="#f2f2f2" stroke="url(#gRing)" stroke-width="2.3"/><path d="M3.4 6.2 H6 M6 3.4 V8.6" stroke="#a8a8b0" stroke-width="0.7"/><path d="M3.8 7.8 Q5.4 8.4 6.8 7.8 M7 3.6 L7.8 4.8" stroke="#e88a8a" stroke-width="0.5" fill="none"/><path d="M7 6.4 L11.2 10.6" stroke="#f0a018" stroke-width="1.9" stroke-linecap="butt"/><path d="M6 5.4 L7.8 5.8 L6.4 7.2 Z" fill="#f2dca8"/><circle cx="11.8" cy="11.3" r="1.1" fill="#e66464"/></g>
<circle cx="1164" cy="118" r="6.9" fill="#6f6f6f"/><circle cx="1182" cy="118" r="6.9" fill="#6f6f6f"/><path d="M1161.1 115.1l5.8 5.8M1166.9 115.1l-5.8 5.8" stroke="#fff" stroke-width="1.9" stroke-linecap="butt"/><rect x="1180.4" y="114.5" width="5.4" height="4.2" rx="0.6" fill="none" stroke="#fff" stroke-width="0.95"/><rect x="1178.3" y="116.8" width="5.4" height="4.2" rx="0.6" fill="#6f6f6f" stroke="#fff" stroke-width="0.95"/>
<circle cx="1164" cy="338" r="6.9" fill="#6f6f6f"/><circle cx="1182" cy="338" r="6.9" fill="#6f6f6f"/><path d="M1161.1 335.1l5.8 5.8M1166.9 335.1l-5.8 5.8" stroke="#fff" stroke-width="1.9" stroke-linecap="butt"/><rect x="1180.4" y="334.5" width="5.4" height="4.2" rx="0.6" fill="none" stroke="#fff" stroke-width="0.95"/><rect x="1178.3" y="336.8" width="5.4" height="4.2" rx="0.6" fill="#6f6f6f" stroke="#fff" stroke-width="0.95"/>
<g transform="translate(1166.85,137.75) scale(1.0)" fill="#000" opacity="1"><use href="#eye"/></g>
<g transform="translate(1204.05,137.75) scale(1.0)" fill="#8a8a8a" opacity="0.75"><use href="#eye"/></g>
<path d="M1242.8 143h12M1248.8 137v12" stroke="#f00000" stroke-width="3.2"/>
<path d="M1280.2 143.4h11.6" stroke="#f00000" stroke-width="3.4"/>
<text x="1316.6" y="147.6" font-family="Liberation Sans, sans-serif" font-size="11.5" fill="#222">a</text><rect x="1323.4" y="136.8" width="0.8" height="12.4" fill="#222"/><text x="1325.2" y="147.6" font-family="Liberation Sans, sans-serif" font-size="11.5" fill="#222">b</text>
<g transform="translate(1354.20,136.00) scale(1.0)"><use href="#pencil"/></g>
<g transform="translate(1392.6,136)" ><rect x="0.4" y="0.4" width="11.6" height="13.4" fill="#dfe6f4" stroke="#b8c0d0" stroke-width="0.6"/><path d="M2.4 2.6 H6 C8.4 2.6 9 4.4 9 6 V9.4" fill="none" stroke="#1a3cf0" stroke-width="2"/><path d="M5.6 8.6 H12.4 L9 13.6 Z" fill="#1a3cf0"/></g>
<g transform="translate(1431.2,138.1)" ><rect x="0.5" y="0.5" width="8.6" height="8.6" rx="0.7" fill="#e8916a" stroke="#e4452e" stroke-width="1"/><path d="M2.9 2.9 L6.7 6.7 M6.7 2.9 L2.9 6.7" stroke="#fff" stroke-width="1.3"/></g>
<g transform="translate(1161.85,161.75) scale(1.0)" fill="#000" opacity="1"><use href="#eye"/></g>
<g transform="translate(1161.85,181.75) scale(1.0)" fill="#000" opacity="1"><use href="#eye"/></g>
<g transform="translate(1161.85,201.75) scale(1.0)" fill="#2c3848" opacity="1"><use href="#eye"/></g>
<g transform="translate(1184.40,180.00) scale(1.0)"><use href="#pencil"/></g>
<g transform="translate(1178.45,357.75) scale(1.0)" fill="#000" opacity="1"><use href="#eye"/></g>
<g transform="translate(1238.25,357.75) scale(1.0)" fill="#8a8a8a" opacity="0.75"><use href="#eye"/></g>
<path d="M1299.2 363h12M1305.2 357v12" stroke="#f00000" stroke-width="3.2"/>
<path d="M1359.0 363.2h11.6" stroke="#f00000" stroke-width="3.4"/>
<g transform="translate(1418.40,356.00) scale(1.0)"><use href="#pencil"/></g>
<g transform="translate(1416.05,381.75) scale(1.0)" fill="#000" opacity="1"><use href="#eye"/></g>
<g transform="translate(1439.6,379.6) scale(1.05)" fill="#b9b9b9" stroke="#b9b9b9"><use href="#lock"/></g>
<g transform="translate(1416.05,401.75) scale(1.0)" fill="#000" opacity="1"><use href="#eye"/></g>
<g transform="translate(1439.6,399.6) scale(1.05)" fill="#b9b9b9" stroke="#b9b9b9"><use href="#lock"/></g>
<g transform="translate(1416.05,421.75) scale(1.0)" fill="#000" opacity="1"><use href="#eye"/></g>
<g transform="translate(1439.6,419.6) scale(1.05)" fill="#b9b9b9" stroke="#b9b9b9"><use href="#lock"/></g>
<g transform="translate(1416.05,441.75) scale(1.0)" fill="#000" opacity="1"><use href="#eye"/></g>
<g transform="translate(1439.6,439.6) scale(1.05)" fill="#b9b9b9" stroke="#b9b9b9"><use href="#lock"/></g>
<g transform="translate(1416.05,461.75) scale(1.0)" fill="#1c2c5c" opacity="1"><use href="#eyeS"/></g>
<g transform="translate(1439.6,459.6) scale(1.05)" fill="#a9bfee" stroke="#a9bfee"><use href="#lock"/></g>
<g transform="translate(1394.96,460.36) scale(0.92)"><use href="#pencil"/></g>
<g transform="translate(1416.05,481.75) scale(1.0)" fill="#000" opacity="1"><use href="#eye"/></g>
<g transform="translate(1439.6,479.6) scale(1.05)" fill="#b9b9b9" stroke="#b9b9b9"><use href="#lock"/></g>
<g transform="translate(1416.05,501.75) scale(1.0)" fill="#000" opacity="1"><use href="#eye"/></g>
<g transform="translate(1439.6,499.6) scale(1.05)" fill="#b9b9b9" stroke="#b9b9b9"><use href="#lock"/></g>
<rect x="1462" y="116" width="2" height="2" fill="#a9a9a9"/><rect x="1468" y="116" width="2" height="2" fill="#a9a9a9"/><rect x="1474" y="116" width="2" height="2" fill="#a9a9a9"/><rect x="1480" y="116" width="2" height="2" fill="#a9a9a9"/><rect x="1486" y="116" width="2" height="2" fill="#a9a9a9"/>
<rect x="1456.2" y="120.4" width="42.6" height="42" rx="4.5" fill="#b7b7b7"/>
<rect x="1456.2" y="167" width="42.6" height="42.4" rx="4.5" fill="#b7b7b7"/>
<rect x="1456.2" y="418.6" width="42.6" height="42.6" rx="4.5" fill="#b7b7b7"/>
<path d="M1458 262.5H1500" stroke="#4e4e4e" stroke-width="1" stroke-dasharray="1 2" fill="none"/>
<path d="M1458 410H1500" stroke="#4e4e4e" stroke-width="1" stroke-dasharray="1 2" fill="none"/>
<g transform="translate(1463,127)" ><use href="#win28"/><path d="M7.4 14 L16.4 10.6 V20.4 L7.4 23.6 Z" fill="#a8a8a8" stroke="#555" stroke-width="0.6"/><path d="M9 13.4 L18 10 V19.8 L9 23 Z" fill="#c8c8c8" stroke="#555" stroke-width="0.6"/><path d="M10.8 12.8 L20.4 9.2 V19 L10.8 22.6 Z" fill="#f4f4f4" stroke="#555" stroke-width="0.6"/><path d="M13 20.4 L18 12.6 L18.4 18.4 M14.8 17.6 L18.2 16.4" fill="none" stroke="#f04848" stroke-width="0.8"/></g>
<g transform="translate(1463,174)" ><use href="#win28"/><rect x="7.2" y="10.6" width="10.6" height="7.6" fill="#f7efc4" stroke="#777" stroke-width="0.8"/><circle cx="16.6" cy="17.8" r="4.4" fill="#f7efc4" fill-opacity="0.8" stroke="#777" stroke-width="0.8"/></g>
<g transform="translate(1463,221)" ><use href="#win28"/><rect x="5.4" y="10" width="17" height="11.4" rx="2" fill="#f5f5f1" stroke="#b8cce8" stroke-width="1"/></g>
<g transform="translate(1463,277)" ><use href="#win28"/><rect x="3.4" y="8.4" width="4" height="3" fill="#000"/><rect x="3.4" y="14.2" width="4" height="3" fill="#000"/><rect x="3.4" y="20" width="4" height="3" fill="#000"/><rect x="10" y="8.6" width="14" height="2.8" fill="#fff" stroke="#555" stroke-width="0.7"/><rect x="10" y="14.4" width="14" height="2.8" fill="#fff" stroke="#555" stroke-width="0.7"/><rect x="10" y="20.2" width="14" height="2.8" fill="#fff" stroke="#555" stroke-width="0.7"/></g>
<g transform="translate(1463,323.2)" ><use href="#win28"/><path d="M6.6 9.4 H21.4 L15.6 16.4 V22.8 L12.6 21 V16.4 Z" fill="#bdbdbd" stroke="#555" stroke-width="0.8"/><ellipse cx="14" cy="9.4" rx="7.4" ry="1.5" fill="#e6e6e6" stroke="#555" stroke-width="0.7"/></g>
<g transform="translate(1463,369)" ><use href="#win28"/><path d="M3.4 16 H25" stroke="#f4a0a0" stroke-width="0.9" stroke-dasharray="2 1"/><path d="M5.8 10 L10 12.6 V19.4 L5.8 22 Z" fill="#f2f2f2" stroke="#444" stroke-width="0.8"/><rect x="10" y="12.4" width="11.6" height="7.2" rx="1" fill="#9a9a9a" stroke="#666" stroke-width="0.6"/><path d="M12 12.6 V19.4 M14 12.6 V19.4 M16 12.6 V19.4 M18 12.6 V19.4" stroke="#c8c8c8" stroke-width="0.7"/></g>
<g transform="translate(1463,425)" ><use href="#win28"/><path d="M3 8.6 H13 M3 11.8 H11.4 M3 15 H14.4 M3 18.2 H13.6" stroke="#8a8a8a" stroke-width="0.8" stroke-dasharray="2.6 0.5 1.8 0.5"/><rect x="1" y="21.6" width="26" height="0.7" fill="#555"/><path d="M3.4 24.8 H5.2 M10 24.8 H24" stroke="#555" stroke-width="0.9" stroke-dasharray="1.8 0.4"/></g>
<g transform="translate(1463,472)" ><use href="#win28"/><rect x="7.6" y="9.6" width="12.6" height="14.6" rx="0.9" fill="#c98a30" stroke="#a86a14" stroke-width="0.7"/><path d="M9 11.2 H18.8 V20.4 L16.4 22.8 H9 Z" fill="#f6f6f6"/><path d="M18.8 20.4 L16.4 22.8 V20.4 Z" fill="#9a9a9a"/><path d="M10.4 14 H17.4 M10.4 16 H17.4 M10.4 18 H17.4 M10.4 20 H14.6" stroke="#d2d2d2" stroke-width="0.6"/><rect x="10.8" y="8.2" width="6.2" height="2.8" rx="0.7" fill="#9c9c94" stroke="#77776f" stroke-width="0.5"/></g>
<g transform="translate(717.4,806.4)" ><rect x="0.5" y="0.5" width="17" height="29" rx="8.5" fill="#fff" stroke="#333" stroke-width="0.9"/><path d="M0.5 12.4 Q9 10.4 17.5 12.4" fill="none" stroke="#333" stroke-width="0.9"/><path d="M9 0.5 V2.6 M9 9.4 V11.2" stroke="#333" stroke-width="0.9"/><rect x="7.5" y="2.6" width="3" height="6.8" rx="1.5" fill="#fff" stroke="#333" stroke-width="0.9"/></g>
</svg><div id="tx"><span class="t" id="t0" style="left:14.00px;top:4.45px;font-size:14px;color:#1c1c1c;letter-spacing:-0.266px;">File</span>
<span class="t" id="t1" style="left:48.50px;top:4.45px;font-size:14px;color:#1c1c1c;letter-spacing:0.170px;">Modifica</span>
<span class="t" id="t2" style="left:115.50px;top:4.45px;font-size:14px;color:#1c1c1c;letter-spacing:-0.075px;">Vista</span>
<span class="t" id="t3" style="left:159.00px;top:4.45px;font-size:14px;color:#1c1c1c;letter-spacing:-0.167px;">Seleziona</span>
<span class="t" id="t4" style="left:232.00px;top:4.45px;font-size:14px;color:#1c1c1c;letter-spacing:-0.054px;">Disegna</span>
<span class="t" id="t5" style="left:296.00px;top:4.45px;font-size:14px;color:#1c1c1c;letter-spacing:-0.028px;">Quota</span>
<span class="t" id="t6" style="left:347.00px;top:4.45px;font-size:14px;color:#1c1c1c;letter-spacing:0.034px;">Modifica CAD</span>
<span class="t" id="t7" style="left:446.00px;top:4.45px;font-size:14px;color:#1c1c1c;letter-spacing:-0.176px;">Snap</span>
<span class="t" id="t8" style="left:491.00px;top:4.45px;font-size:14px;color:#1c1c1c;letter-spacing:-0.090px;">Info</span>
<span class="t" id="t9" style="left:527.00px;top:4.45px;font-size:14px;color:#1c1c1c;letter-spacing:0.042px;">Livello</span>
<span class="t" id="t10" style="left:580.00px;top:4.45px;font-size:14px;color:#1c1c1c;letter-spacing:-0.005px;">Blocco</span>
<span class="t" id="t11" style="left:635.00px;top:4.45px;font-size:14px;color:#1c1c1c;letter-spacing:-0.072px;">Finestra</span>
<span class="t" id="t12" style="left:698.00px;top:4.45px;font-size:14px;color:#1c1c1c;letter-spacing:-0.331px;">Varie</span>
<span class="t" id="t13" style="left:741.00px;top:4.45px;font-size:14px;color:#1c1c1c;letter-spacing:0.416px;">Aiuto</span>
<span class="t" id="t14" style="left:77.50px;top:752.16px;font-size:12.8px;color:#0000d8;letter-spacing:0.179px;"><i>Comando:</i> layeradd</span>
<span class="t" id="t15" style="left:73.00px;top:780.16px;font-size:12.8px;color:#111;letter-spacing:0.244px;">Comando:</span>
<span class="t" id="t16" style="left:1103.30px;top:734.03px;font-size:13.2px;color:#111;letter-spacing:-0.213px;">10 &lt; 100</span>
<span class="t" id="t17" style="left:591.60px;top:115.19px;font-size:11px;color:#151515;letter-spacing:0.481px;">* birdhouse.dxf</span>
<span class="t" id="t18" style="left:1274.50px;top:113.78px;font-size:11.6px;color:#262626;letter-spacing:0.141px;">Elenco dei blocchi</span>
<span class="t" id="t19" style="left:1280.00px;top:333.78px;font-size:11.6px;color:#262626;letter-spacing:0.139px;">Elenco dei livelli</span>
<span class="t" id="t20" style="left:1205.40px;top:161.89px;font-size:12.3px;color:#111;letter-spacing:0.575px;">Model (*Model_Space)</span>
<span class="t" id="t21" style="left:1205.40px;top:181.89px;font-size:12.3px;color:#111;letter-spacing:0.406px;">Layout1 (*Paper_Space)</span>
<span class="t" id="t22" style="left:1205.40px;top:201.89px;font-size:12.3px;color:#111;letter-spacing:0.434px;">Bordo</span>
<span class="t" id="t23" style="left:1183.40px;top:382.00px;font-size:12.4px;color:#111;letter-spacing:0.594px;">0</span>
<span class="t" id="t24" style="left:1183.40px;top:402.00px;font-size:12.4px;color:#111;letter-spacing:0.384px;">Bordo</span>
<span class="t" id="t25" style="left:1183.40px;top:422.00px;font-size:12.4px;color:#111;letter-spacing:0.433px;">Centro</span>
<span class="t" id="t26" style="left:1183.40px;top:442.00px;font-size:12.4px;color:#111;letter-spacing:0.627px;">Defpoints</span>
<span class="t" id="t27" style="left:1183.40px;top:462.00px;font-size:12.4px;color:#fff;letter-spacing:0.424px;">Finestre di layout</span>
<span class="t" id="t28" style="left:1183.40px;top:482.00px;font-size:12.4px;color:#111;letter-spacing:0.447px;">Quote</span>
<span class="t" id="t29" style="left:1183.40px;top:502.00px;font-size:12.4px;color:#111;letter-spacing:0.321px;">Visibile</span>
<span class="t" id="t30" style="left:2.50px;top:806.96px;font-size:9.5px;color:#111;letter-spacing:0.337px;">59.5692,130.3145</span>
<span class="t" id="t31" style="left:2.50px;top:827.86px;font-size:9.5px;color:#111;letter-spacing:0.396px;">@-0.4308,0.3145</span>
<span class="t" id="t32" style="left:256.00px;top:806.96px;font-size:9.5px;color:#111;letter-spacing:0.371px;">143.2841&lt;65°</span>
<span class="t" id="t33" style="left:256.00px;top:827.86px;font-size:9.5px;color:#111;letter-spacing:0.383px;">@0.5334&lt;144°</span>
<span class="t" id="t34" style="left:571.80px;top:817.84px;font-size:9.4px;color:#111;letter-spacing:0.366px;">Selezionare entità o regione</span>
<span class="t" id="t35" style="left:949.20px;top:817.84px;font-size:9.4px;color:#111;letter-spacing:0.367px;">Nessun entità selezionate.</span>
<span class="t" id="t36" style="left:549.00px;top:581.66px;font-size:5.6px;color:#111;letter-spacing:0.004px;">Item ref</span>
<span class="t" id="t37" style="left:582.80px;top:581.66px;font-size:5.6px;color:#111;letter-spacing:0.082px;">Quantity</span>
<span class="t" id="t38" style="left:621.70px;top:581.66px;font-size:5.6px;color:#111;letter-spacing:0.060px;">Title/Name, destination, material, dimension etc</span>
<span class="t" id="t39" style="left:821.90px;top:581.66px;font-size:5.6px;color:#111;letter-spacing:0.063px;">Article No./Reference</span>
<span class="t" id="t40" style="left:549.00px;top:594.06px;font-size:5.6px;color:#111;letter-spacing:0.081px;">Designed by</span>
<span class="t" id="t41" style="left:621.50px;top:594.06px;font-size:5.6px;color:#111;letter-spacing:0.045px;">Checked by</span>
<span class="t" id="t42" style="left:689.00px;top:594.06px;font-size:5.6px;color:#111;letter-spacing:0.069px;">Approved by - date</span>
<span class="t" id="t43" style="left:767.60px;top:594.26px;font-size:5.6px;color:#111;letter-spacing:0.061px;">Filename</span>
<span class="t" id="t44" style="left:792.50px;top:604.66px;font-size:5.6px;color:#111;letter-spacing:0.291px;">file.dxf</span>
<span class="t" id="t45" style="left:821.30px;top:594.26px;font-size:5.6px;color:#111;letter-spacing:-0.082px;">Date</span>
<span class="t" id="t46" style="left:832.00px;top:601.53px;font-size:10px;color:#111;letter-spacing:-0.256px;">01/01/2025</span>
<span class="t" id="t47" style="left:890.20px;top:594.26px;font-size:5.6px;color:#111;letter-spacing:0.000px;">Scale</span>
<span class="t" id="t48" style="left:913.70px;top:601.53px;font-size:10px;color:#111;letter-spacing:-0.469px;">1:1</span>
<span class="t" id="t49" style="left:723.00px;top:619.06px;font-size:16px;color:#111;letter-spacing:-0.128px;">Title</span>
<span class="t" id="t50" style="left:856.20px;top:639.86px;font-size:5.6px;color:#111;letter-spacing:0.056px;">Edition</span>
<span class="t" id="t51" style="left:891.70px;top:639.86px;font-size:5.6px;color:#111;letter-spacing:0.075px;">Sheet</span>
<span class="t" id="t52" style="left:913.70px;top:646.13px;font-size:10px;color:#111;letter-spacing:-0.469px;">1/1</span></div>
</body></html>
